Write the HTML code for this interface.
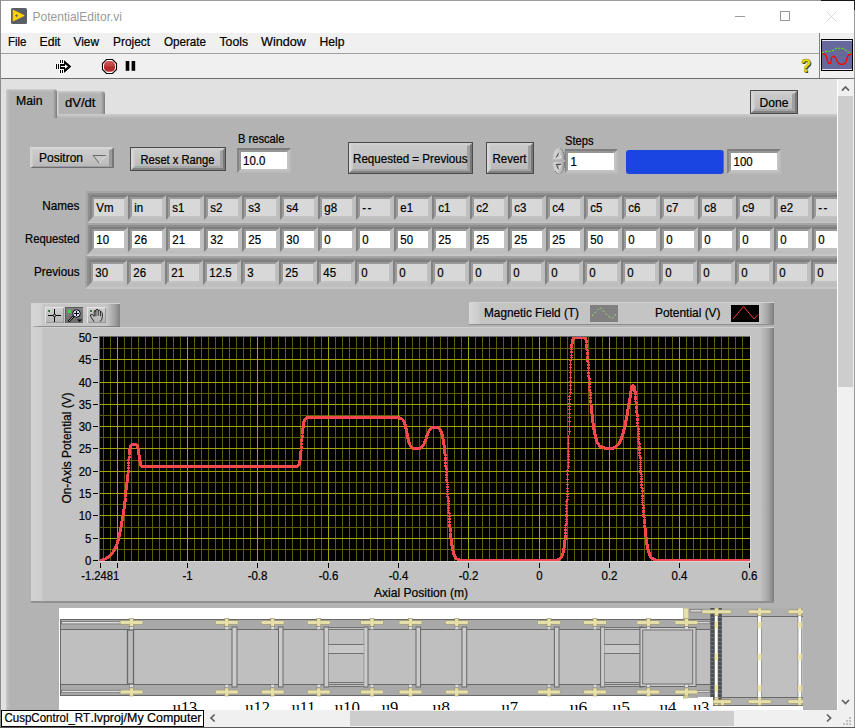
<!DOCTYPE html>
<html><head><meta charset="utf-8"><title>PotentialEditor.vi</title>
<style>
html,body{margin:0;padding:0}
body{width:855px;height:728px;position:relative;overflow:hidden;background:#fff;font-family:'Liberation Sans', sans-serif;}
div{box-sizing:border-box}
svg text{font-family:'Liberation Sans', sans-serif;}
</style></head><body>
<div style="position:absolute;left:0px;top:0px;width:855px;height:33px;background:#fff"></div>
<div style="position:absolute;left:0px;top:33px;width:855px;height:46px;background:#f0f0f0"></div>
<div style="position:absolute;left:1px;top:53px;width:818px;height:1px;background:#a0a0a0"></div>
<div style="position:absolute;left:819px;top:33px;width:1px;height:45px;background:#828282"></div>
<div style="position:absolute;left:0px;top:79px;width:838px;height:631px;background:#e1e1e1"></div>
<div style="position:absolute;left:0px;top:78px;width:855px;height:1px;background:#707070"></div>
<svg style="position:absolute;left:11px;top:8px" width="16" height="16" viewBox="0 0 16 16">
<rect x="0" y="0" width="16" height="16" rx="1.6" fill="#5c5e66"/>
<path d="M2.2 2.2 L13.2 7.6 L2.2 12.9 Z" fill="#ffd400" stroke="#ffd400" stroke-width="0.9" stroke-linejoin="round"/>
<path d="M5.6 6.3 V9.1 M4.2 7.7 H7" stroke="#5c5e66" stroke-width="0.9" fill="none"/>
</svg>
<svg style="position:absolute;left:730px;top:5px" width="115" height="24" viewBox="730 5 115 24">
<path d="M735 16.5 H745" stroke="#9a9a9a" stroke-width="1"/>
<rect x="780.5" y="11.5" width="9" height="9" fill="none" stroke="#9a9a9a" stroke-width="1"/>
<path d="M826.5 11.5 L836.5 21.5 M836.5 11.5 L826.5 21.5" stroke="#d6d6d6" stroke-width="1"/>
</svg>
<svg style="position:absolute;left:50px;top:54px" width="100" height="24" viewBox="50 54 100 24">
<!-- run arrow (running) -->
<g stroke="#fff" stroke-width="2" stroke-linejoin="round" fill="#fff"><path d="M64 60 L71.4 66.5 L64 73 Z M60 64 H64 V69 H60 Z"/><path d="M56.5 64V69M58.5 64V69M60.5 60V63M62.5 60V63M60.5 70V73M62.5 70V73" stroke-width="3"/></g>
<path d="M64 60 L71.4 66.5 L64 73 Z M60 64 H64.5 V69 H60 Z" fill="#000"/>
<path d="M61 66 H65 V64.3 L68 66.5 L65 68.7 V67 H61 Z" fill="#fff"/>
<path d="M56.5 64V69M58.5 64V69M60.5 60V63M62.5 60V63M60.5 70V73M62.5 70V73" stroke="#000" stroke-width="1" fill="none"/>
<!-- abort -->
<path d="M106.5 59.5 H112.5 L116.5 63.5 V69.5 L112.5 73.5 H106.5 L102.5 69.5 V63.5 Z" fill="#fff" stroke="#000" stroke-width="1.1"/>
<defs><linearGradient id="rg" x1="0" y1="0" x2="0" y2="1"><stop offset="0" stop-color="#d05858"/><stop offset="0.5" stop-color="#c03a3a"/><stop offset="0.55" stop-color="#b02828"/><stop offset="1" stop-color="#b83030"/></linearGradient></defs>
<rect x="104" y="61" width="11" height="10.8" rx="4.4" fill="url(#rg)"/>
<!-- pause -->
<rect x="125.7" y="61" width="3.6" height="9.8" fill="#000"/>
<rect x="131.6" y="61" width="3.6" height="9.8" fill="#000"/>
</svg>
<svg style="position:absolute;left:821px;top:39px" width="32" height="32" viewBox="0 0 32 32">
<rect x="0.5" y="0.5" width="31" height="31" fill="#67689b" stroke="#000" stroke-width="1"/>
<path d="M1 1.5H31M1 30.5H31" stroke="#e6e6f4" stroke-width="1"/>
<path d="M1 14.2 L3.5 12.6 L9.5 12 L12.5 11.3 L15 9.2 L21 9.2 L24 10.6 L27 13 L30.5 14.6" fill="none" stroke="#58f000" stroke-width="1.1" stroke-dasharray="2.2 1.3"/>
<path d="M1 15 L4 15.3 L5.5 18 L6.5 22 L7.5 24.2 L9.7 24.2 L10.5 19 L11.5 17.4 L13.5 17.4 L15 20 L16.5 23 L18.5 25 L22.5 25.3 L24.8 23.5 L26 19 L27.5 16 L31 14.8" fill="none" stroke="#f40808" stroke-width="1.4" stroke-linejoin="round"/>
</svg>
<div style="position:absolute;left:837px;top:79px;width:1px;height:631px;background:#fff"></div>
<div style="position:absolute;left:838px;top:79px;width:16px;height:631px;background:#f0f0f0"></div>
<div style="position:absolute;left:838px;top:96px;width:15px;height:291px;background:#cdcdcd"></div>
<div style="position:absolute;left:204px;top:710px;width:650px;height:17px;background:#f0f0f0"></div>
<div style="position:absolute;left:350px;top:711px;width:384px;height:15px;background:#cdcdcd"></div>
<svg style="position:absolute;left:838px;top:79px" width="16" height="20" viewBox="838 79 16 20"><path d="M842 90.6 L845.5 87 L849 90.6" fill="none" stroke="#606060" stroke-width="1.7"/></svg>
<svg style="position:absolute;left:838px;top:694px" width="16" height="16" viewBox="838 694 16 16"><path d="M842 700 L845.5 703.6 L849 700" fill="none" stroke="#606060" stroke-width="1.7"/></svg>
<svg style="position:absolute;left:205px;top:710px" width="16" height="17" viewBox="205 710 16 17"><path d="M214.6 714.5 L211 718 L214.6 721.5" fill="none" stroke="#606060" stroke-width="1.7"/></svg>
<svg style="position:absolute;left:820px;top:710px" width="34" height="17" viewBox="820 710 34 17"><path d="M827 714.5 L830.6 718 L827 721.5" fill="none" stroke="#606060" stroke-width="1.7"/>
<g fill="#c0c0c0"><rect x="849" y="717" width="2" height="2"/><rect x="849" y="720" width="2" height="2"/><rect x="849" y="723" width="2" height="2"/><rect x="846" y="720" width="2" height="2"/><rect x="846" y="723" width="2" height="2"/><rect x="843" y="723" width="2" height="2"/></g></svg>
<div style="position:absolute;left:1px;top:710px;width:203px;height:17px;background:#fff;border:1px solid #000"></div>
<div style="position:absolute;left:0;top:79px;width:837px;height:631px;overflow:hidden">
<div style="position:absolute;left:6px;top:35px;width:900px;height:700px;background:#b3b3b3"></div>
<div style="position:absolute;left:6px;top:35px;width:900px;height:4px;background:linear-gradient(#cbcbcb,#c3c3c3 50%,#b3b3b3)"></div>
<div style="position:absolute;left:6px;top:21px;width:4px;height:700px;background:linear-gradient(90deg,#c9c9c9,#bdbdbd 50%,#b3b3b3)"></div>
<div style="position:absolute;left:57px;top:12px;width:48px;height:23px;background:#b3b3b3;border-radius:0 3px 0 0"></div>
<div style="position:absolute;left:57px;top:12px;width:48px;height:3px;background:linear-gradient(#cdcdcd,#b3b3b3);border-radius:0 3px 0 0"></div>
<div style="position:absolute;left:101px;top:13px;width:4px;height:22px;background:linear-gradient(90deg,#b3b3b3,#9a9a9a 50%,#7c7c7c);border-radius:0 3px 0 0"></div>
<div style="position:absolute;left:57px;top:13px;width:2px;height:22px;background:linear-gradient(90deg,#e6e6e6,#b3b3b3)"></div>
<div style="position:absolute;left:6px;top:10px;width:51px;height:30px;background:#b3b3b3;border-radius:3px 3px 0 0"></div>
<div style="position:absolute;left:6px;top:10px;width:51px;height:3px;background:linear-gradient(#cdcdcd,#b3b3b3);border-radius:3px 3px 0 0"></div>
<div style="position:absolute;left:6px;top:11px;width:4px;height:30px;background:linear-gradient(90deg,#c9c9c9,#bdbdbd 50%,#b3b3b3);border-radius:3px 0 0 0"></div>
<div style="position:absolute;left:53px;top:11px;width:4px;height:28px;background:linear-gradient(90deg,#b3b3b3,#9a9a9a 50%,#7a7a7a);border-radius:0 3px 0 0"></div>
<div style="position:absolute;left:750px;top:11px;width:48px;height:24px;background:#4a4a4a"></div>
<div style="position:absolute;left:751px;top:12px;width:46px;height:22px;border-style:solid;border-width:2px;border-color:#d0d0d0 #787878 #828282 #d8d8d8;background:#c4c4c4"></div>
<div style="position:absolute;left:753px;top:14px;width:42px;height:18px;border-style:solid;border-width:1px 3px 2px 2px;border-color:#cacaca #a0a0a0 #a6a6a6 #cecece;background:linear-gradient(#cacaca,#c3c3c3 50%,#bababa)"></div>
<div style="position:absolute;left:30px;top:68px;width:84px;height:21px;border-style:solid;border-width:2px 2px 1px 2px;border-color:#d6d6d6 #787878 #6e6e6e #d2d2d2;background:#c0c0c0"></div>
<div style="position:absolute;left:32px;top:70px;width:80px;height:18px;border-style:solid;border-width:1px 3px 1px 1px;border-color:#cecece #9a9a9a #9e9e9e #cccccc;background:linear-gradient(#cdcdcd,#c4c4c4 50%,#bababa)"></div>
<div style="position:absolute;left:130px;top:68px;width:96px;height:24px;background:#4a4a4a"></div>
<div style="position:absolute;left:131px;top:69px;width:94px;height:22px;border-style:solid;border-width:2px;border-color:#d0d0d0 #787878 #828282 #d8d8d8;background:#c4c4c4"></div>
<div style="position:absolute;left:133px;top:71px;width:90px;height:18px;border-style:solid;border-width:1px 3px 2px 2px;border-color:#cacaca #a0a0a0 #a6a6a6 #cecece;background:linear-gradient(#cacaca,#c3c3c3 50%,#bababa)"></div>
<div style="position:absolute;left:237px;top:69px;width:54px;height:25px;border-style:solid;border-width:2px;border-color:#7e7e7e #bcbcbc #bababa #868686;background:#999"></div>
<div style="position:absolute;left:239px;top:71px;width:50px;height:21px;border-style:solid;border-width:2px;border-color:#969696 #c4c4c4 #c2c2c2 #9a9a9a;background:#fff"></div>
<div style="position:absolute;left:348px;top:63px;width:125px;height:32px;background:#4a4a4a"></div>
<div style="position:absolute;left:349px;top:64px;width:123px;height:30px;border-style:solid;border-width:2px;border-color:#d0d0d0 #787878 #828282 #d8d8d8;background:#c4c4c4"></div>
<div style="position:absolute;left:351px;top:66px;width:119px;height:26px;border-style:solid;border-width:1px 3px 2px 2px;border-color:#cacaca #a0a0a0 #a6a6a6 #cecece;background:linear-gradient(#cacaca,#c3c3c3 50%,#bababa)"></div>
<div style="position:absolute;left:486px;top:63px;width:48px;height:32px;background:#4a4a4a"></div>
<div style="position:absolute;left:487px;top:64px;width:46px;height:30px;border-style:solid;border-width:2px;border-color:#d0d0d0 #787878 #828282 #d8d8d8;background:#c4c4c4"></div>
<div style="position:absolute;left:489px;top:66px;width:42px;height:26px;border-style:solid;border-width:1px 3px 2px 2px;border-color:#cacaca #a0a0a0 #a6a6a6 #cecece;background:linear-gradient(#cacaca,#c3c3c3 50%,#bababa)"></div>
<div style="position:absolute;left:564px;top:70px;width:54px;height:25px;border-style:solid;border-width:2px;border-color:#7e7e7e #bcbcbc #bababa #868686;background:#999"></div>
<div style="position:absolute;left:566px;top:72px;width:50px;height:21px;border-style:solid;border-width:2px;border-color:#969696 #c4c4c4 #c2c2c2 #9a9a9a;background:#fff"></div>
<div style="position:absolute;left:564px;top:70px;width:1px;height:25px;background:#b3b3b3"></div>
<div style="position:absolute;left:626px;top:71px;width:98px;height:24px;background:#1a45e0;border-radius:3px;border-right:1px solid #6a6a8a"></div>
<div style="position:absolute;left:727px;top:70px;width:54px;height:25px;border-style:solid;border-width:2px;border-color:#7e7e7e #bcbcbc #bababa #868686;background:#999"></div>
<div style="position:absolute;left:729px;top:72px;width:50px;height:21px;border-style:solid;border-width:2px;border-color:#969696 #c4c4c4 #c2c2c2 #9a9a9a;background:#fff"></div>
<div style="position:absolute;left:86px;top:112px;width:900px;height:33px;border-style:solid;border-width:2px;border-color:#a4a4a4 #c4c4c4 #c6c6c6 #a6a6a6;background:#b3b3b3"></div>
<div style="position:absolute;left:88px;top:114px;width:900px;height:29px;border-style:solid;border-width:2px;border-color:#8e8e8e #bebebe #bebebe #8e8e8e;background:#b3b3b3"></div>
<div style="position:absolute;left:90px;top:116px;width:38px;height:25px;border-style:solid;border-width:2px;border-color:#7e7e7e #bcbcbc #bebebe #828282;background:#999"></div>
<div style="position:absolute;left:92px;top:118px;width:34px;height:21px;border-style:solid;border-width:2px;border-color:#989898 #c0c0c0 #c2c2c2 #9a9a9a;background:#d8d8d8"></div>
<div style="position:absolute;left:128px;top:116px;width:38px;height:25px;border-style:solid;border-width:2px;border-color:#7e7e7e #bcbcbc #bebebe #828282;background:#999"></div>
<div style="position:absolute;left:130px;top:118px;width:34px;height:21px;border-style:solid;border-width:2px;border-color:#989898 #c0c0c0 #c2c2c2 #9a9a9a;background:#d8d8d8"></div>
<div style="position:absolute;left:166px;top:116px;width:38px;height:25px;border-style:solid;border-width:2px;border-color:#7e7e7e #bcbcbc #bebebe #828282;background:#999"></div>
<div style="position:absolute;left:168px;top:118px;width:34px;height:21px;border-style:solid;border-width:2px;border-color:#989898 #c0c0c0 #c2c2c2 #9a9a9a;background:#d8d8d8"></div>
<div style="position:absolute;left:204px;top:116px;width:38px;height:25px;border-style:solid;border-width:2px;border-color:#7e7e7e #bcbcbc #bebebe #828282;background:#999"></div>
<div style="position:absolute;left:206px;top:118px;width:34px;height:21px;border-style:solid;border-width:2px;border-color:#989898 #c0c0c0 #c2c2c2 #9a9a9a;background:#d8d8d8"></div>
<div style="position:absolute;left:242px;top:116px;width:38px;height:25px;border-style:solid;border-width:2px;border-color:#7e7e7e #bcbcbc #bebebe #828282;background:#999"></div>
<div style="position:absolute;left:244px;top:118px;width:34px;height:21px;border-style:solid;border-width:2px;border-color:#989898 #c0c0c0 #c2c2c2 #9a9a9a;background:#d8d8d8"></div>
<div style="position:absolute;left:280px;top:116px;width:38px;height:25px;border-style:solid;border-width:2px;border-color:#7e7e7e #bcbcbc #bebebe #828282;background:#999"></div>
<div style="position:absolute;left:282px;top:118px;width:34px;height:21px;border-style:solid;border-width:2px;border-color:#989898 #c0c0c0 #c2c2c2 #9a9a9a;background:#d8d8d8"></div>
<div style="position:absolute;left:318px;top:116px;width:38px;height:25px;border-style:solid;border-width:2px;border-color:#7e7e7e #bcbcbc #bebebe #828282;background:#999"></div>
<div style="position:absolute;left:320px;top:118px;width:34px;height:21px;border-style:solid;border-width:2px;border-color:#989898 #c0c0c0 #c2c2c2 #9a9a9a;background:#d8d8d8"></div>
<div style="position:absolute;left:356px;top:116px;width:38px;height:25px;border-style:solid;border-width:2px;border-color:#7e7e7e #bcbcbc #bebebe #828282;background:#999"></div>
<div style="position:absolute;left:358px;top:118px;width:34px;height:21px;border-style:solid;border-width:2px;border-color:#989898 #c0c0c0 #c2c2c2 #9a9a9a;background:#d8d8d8"></div>
<div style="position:absolute;left:394px;top:116px;width:38px;height:25px;border-style:solid;border-width:2px;border-color:#7e7e7e #bcbcbc #bebebe #828282;background:#999"></div>
<div style="position:absolute;left:396px;top:118px;width:34px;height:21px;border-style:solid;border-width:2px;border-color:#989898 #c0c0c0 #c2c2c2 #9a9a9a;background:#d8d8d8"></div>
<div style="position:absolute;left:432px;top:116px;width:38px;height:25px;border-style:solid;border-width:2px;border-color:#7e7e7e #bcbcbc #bebebe #828282;background:#999"></div>
<div style="position:absolute;left:434px;top:118px;width:34px;height:21px;border-style:solid;border-width:2px;border-color:#989898 #c0c0c0 #c2c2c2 #9a9a9a;background:#d8d8d8"></div>
<div style="position:absolute;left:470px;top:116px;width:38px;height:25px;border-style:solid;border-width:2px;border-color:#7e7e7e #bcbcbc #bebebe #828282;background:#999"></div>
<div style="position:absolute;left:472px;top:118px;width:34px;height:21px;border-style:solid;border-width:2px;border-color:#989898 #c0c0c0 #c2c2c2 #9a9a9a;background:#d8d8d8"></div>
<div style="position:absolute;left:508px;top:116px;width:38px;height:25px;border-style:solid;border-width:2px;border-color:#7e7e7e #bcbcbc #bebebe #828282;background:#999"></div>
<div style="position:absolute;left:510px;top:118px;width:34px;height:21px;border-style:solid;border-width:2px;border-color:#989898 #c0c0c0 #c2c2c2 #9a9a9a;background:#d8d8d8"></div>
<div style="position:absolute;left:546px;top:116px;width:38px;height:25px;border-style:solid;border-width:2px;border-color:#7e7e7e #bcbcbc #bebebe #828282;background:#999"></div>
<div style="position:absolute;left:548px;top:118px;width:34px;height:21px;border-style:solid;border-width:2px;border-color:#989898 #c0c0c0 #c2c2c2 #9a9a9a;background:#d8d8d8"></div>
<div style="position:absolute;left:584px;top:116px;width:38px;height:25px;border-style:solid;border-width:2px;border-color:#7e7e7e #bcbcbc #bebebe #828282;background:#999"></div>
<div style="position:absolute;left:586px;top:118px;width:34px;height:21px;border-style:solid;border-width:2px;border-color:#989898 #c0c0c0 #c2c2c2 #9a9a9a;background:#d8d8d8"></div>
<div style="position:absolute;left:622px;top:116px;width:38px;height:25px;border-style:solid;border-width:2px;border-color:#7e7e7e #bcbcbc #bebebe #828282;background:#999"></div>
<div style="position:absolute;left:624px;top:118px;width:34px;height:21px;border-style:solid;border-width:2px;border-color:#989898 #c0c0c0 #c2c2c2 #9a9a9a;background:#d8d8d8"></div>
<div style="position:absolute;left:660px;top:116px;width:38px;height:25px;border-style:solid;border-width:2px;border-color:#7e7e7e #bcbcbc #bebebe #828282;background:#999"></div>
<div style="position:absolute;left:662px;top:118px;width:34px;height:21px;border-style:solid;border-width:2px;border-color:#989898 #c0c0c0 #c2c2c2 #9a9a9a;background:#d8d8d8"></div>
<div style="position:absolute;left:698px;top:116px;width:38px;height:25px;border-style:solid;border-width:2px;border-color:#7e7e7e #bcbcbc #bebebe #828282;background:#999"></div>
<div style="position:absolute;left:700px;top:118px;width:34px;height:21px;border-style:solid;border-width:2px;border-color:#989898 #c0c0c0 #c2c2c2 #9a9a9a;background:#d8d8d8"></div>
<div style="position:absolute;left:736px;top:116px;width:38px;height:25px;border-style:solid;border-width:2px;border-color:#7e7e7e #bcbcbc #bebebe #828282;background:#999"></div>
<div style="position:absolute;left:738px;top:118px;width:34px;height:21px;border-style:solid;border-width:2px;border-color:#989898 #c0c0c0 #c2c2c2 #9a9a9a;background:#d8d8d8"></div>
<div style="position:absolute;left:774px;top:116px;width:38px;height:25px;border-style:solid;border-width:2px;border-color:#7e7e7e #bcbcbc #bebebe #828282;background:#999"></div>
<div style="position:absolute;left:776px;top:118px;width:34px;height:21px;border-style:solid;border-width:2px;border-color:#989898 #c0c0c0 #c2c2c2 #9a9a9a;background:#d8d8d8"></div>
<div style="position:absolute;left:812px;top:116px;width:38px;height:25px;border-style:solid;border-width:2px;border-color:#7e7e7e #bcbcbc #bebebe #828282;background:#999"></div>
<div style="position:absolute;left:814px;top:118px;width:34px;height:21px;border-style:solid;border-width:2px;border-color:#989898 #c0c0c0 #c2c2c2 #9a9a9a;background:#d8d8d8"></div>
<div style="position:absolute;left:86px;top:144px;width:900px;height:33px;border-style:solid;border-width:2px;border-color:#a4a4a4 #c4c4c4 #c6c6c6 #a6a6a6;background:#b3b3b3"></div>
<div style="position:absolute;left:88px;top:146px;width:900px;height:29px;border-style:solid;border-width:2px;border-color:#8e8e8e #bebebe #bebebe #8e8e8e;background:#b3b3b3"></div>
<div style="position:absolute;left:90px;top:148px;width:38px;height:25px;border-style:solid;border-width:2px;border-color:#7e7e7e #bcbcbc #bebebe #828282;background:#999"></div>
<div style="position:absolute;left:92px;top:150px;width:34px;height:21px;border-style:solid;border-width:2px;border-color:#989898 #c0c0c0 #c2c2c2 #9a9a9a;background:#fff"></div>
<div style="position:absolute;left:128px;top:148px;width:38px;height:25px;border-style:solid;border-width:2px;border-color:#7e7e7e #bcbcbc #bebebe #828282;background:#999"></div>
<div style="position:absolute;left:130px;top:150px;width:34px;height:21px;border-style:solid;border-width:2px;border-color:#989898 #c0c0c0 #c2c2c2 #9a9a9a;background:#fff"></div>
<div style="position:absolute;left:166px;top:148px;width:38px;height:25px;border-style:solid;border-width:2px;border-color:#7e7e7e #bcbcbc #bebebe #828282;background:#999"></div>
<div style="position:absolute;left:168px;top:150px;width:34px;height:21px;border-style:solid;border-width:2px;border-color:#989898 #c0c0c0 #c2c2c2 #9a9a9a;background:#fff"></div>
<div style="position:absolute;left:204px;top:148px;width:38px;height:25px;border-style:solid;border-width:2px;border-color:#7e7e7e #bcbcbc #bebebe #828282;background:#999"></div>
<div style="position:absolute;left:206px;top:150px;width:34px;height:21px;border-style:solid;border-width:2px;border-color:#989898 #c0c0c0 #c2c2c2 #9a9a9a;background:#fff"></div>
<div style="position:absolute;left:242px;top:148px;width:38px;height:25px;border-style:solid;border-width:2px;border-color:#7e7e7e #bcbcbc #bebebe #828282;background:#999"></div>
<div style="position:absolute;left:244px;top:150px;width:34px;height:21px;border-style:solid;border-width:2px;border-color:#989898 #c0c0c0 #c2c2c2 #9a9a9a;background:#fff"></div>
<div style="position:absolute;left:280px;top:148px;width:38px;height:25px;border-style:solid;border-width:2px;border-color:#7e7e7e #bcbcbc #bebebe #828282;background:#999"></div>
<div style="position:absolute;left:282px;top:150px;width:34px;height:21px;border-style:solid;border-width:2px;border-color:#989898 #c0c0c0 #c2c2c2 #9a9a9a;background:#fff"></div>
<div style="position:absolute;left:318px;top:148px;width:38px;height:25px;border-style:solid;border-width:2px;border-color:#7e7e7e #bcbcbc #bebebe #828282;background:#999"></div>
<div style="position:absolute;left:320px;top:150px;width:34px;height:21px;border-style:solid;border-width:2px;border-color:#989898 #c0c0c0 #c2c2c2 #9a9a9a;background:#fff"></div>
<div style="position:absolute;left:356px;top:148px;width:38px;height:25px;border-style:solid;border-width:2px;border-color:#7e7e7e #bcbcbc #bebebe #828282;background:#999"></div>
<div style="position:absolute;left:358px;top:150px;width:34px;height:21px;border-style:solid;border-width:2px;border-color:#989898 #c0c0c0 #c2c2c2 #9a9a9a;background:#fff"></div>
<div style="position:absolute;left:394px;top:148px;width:38px;height:25px;border-style:solid;border-width:2px;border-color:#7e7e7e #bcbcbc #bebebe #828282;background:#999"></div>
<div style="position:absolute;left:396px;top:150px;width:34px;height:21px;border-style:solid;border-width:2px;border-color:#989898 #c0c0c0 #c2c2c2 #9a9a9a;background:#fff"></div>
<div style="position:absolute;left:432px;top:148px;width:38px;height:25px;border-style:solid;border-width:2px;border-color:#7e7e7e #bcbcbc #bebebe #828282;background:#999"></div>
<div style="position:absolute;left:434px;top:150px;width:34px;height:21px;border-style:solid;border-width:2px;border-color:#989898 #c0c0c0 #c2c2c2 #9a9a9a;background:#fff"></div>
<div style="position:absolute;left:470px;top:148px;width:38px;height:25px;border-style:solid;border-width:2px;border-color:#7e7e7e #bcbcbc #bebebe #828282;background:#999"></div>
<div style="position:absolute;left:472px;top:150px;width:34px;height:21px;border-style:solid;border-width:2px;border-color:#989898 #c0c0c0 #c2c2c2 #9a9a9a;background:#fff"></div>
<div style="position:absolute;left:508px;top:148px;width:38px;height:25px;border-style:solid;border-width:2px;border-color:#7e7e7e #bcbcbc #bebebe #828282;background:#999"></div>
<div style="position:absolute;left:510px;top:150px;width:34px;height:21px;border-style:solid;border-width:2px;border-color:#989898 #c0c0c0 #c2c2c2 #9a9a9a;background:#fff"></div>
<div style="position:absolute;left:546px;top:148px;width:38px;height:25px;border-style:solid;border-width:2px;border-color:#7e7e7e #bcbcbc #bebebe #828282;background:#999"></div>
<div style="position:absolute;left:548px;top:150px;width:34px;height:21px;border-style:solid;border-width:2px;border-color:#989898 #c0c0c0 #c2c2c2 #9a9a9a;background:#fff"></div>
<div style="position:absolute;left:584px;top:148px;width:38px;height:25px;border-style:solid;border-width:2px;border-color:#7e7e7e #bcbcbc #bebebe #828282;background:#999"></div>
<div style="position:absolute;left:586px;top:150px;width:34px;height:21px;border-style:solid;border-width:2px;border-color:#989898 #c0c0c0 #c2c2c2 #9a9a9a;background:#fff"></div>
<div style="position:absolute;left:622px;top:148px;width:38px;height:25px;border-style:solid;border-width:2px;border-color:#7e7e7e #bcbcbc #bebebe #828282;background:#999"></div>
<div style="position:absolute;left:624px;top:150px;width:34px;height:21px;border-style:solid;border-width:2px;border-color:#989898 #c0c0c0 #c2c2c2 #9a9a9a;background:#fff"></div>
<div style="position:absolute;left:660px;top:148px;width:38px;height:25px;border-style:solid;border-width:2px;border-color:#7e7e7e #bcbcbc #bebebe #828282;background:#999"></div>
<div style="position:absolute;left:662px;top:150px;width:34px;height:21px;border-style:solid;border-width:2px;border-color:#989898 #c0c0c0 #c2c2c2 #9a9a9a;background:#fff"></div>
<div style="position:absolute;left:698px;top:148px;width:38px;height:25px;border-style:solid;border-width:2px;border-color:#7e7e7e #bcbcbc #bebebe #828282;background:#999"></div>
<div style="position:absolute;left:700px;top:150px;width:34px;height:21px;border-style:solid;border-width:2px;border-color:#989898 #c0c0c0 #c2c2c2 #9a9a9a;background:#fff"></div>
<div style="position:absolute;left:736px;top:148px;width:38px;height:25px;border-style:solid;border-width:2px;border-color:#7e7e7e #bcbcbc #bebebe #828282;background:#999"></div>
<div style="position:absolute;left:738px;top:150px;width:34px;height:21px;border-style:solid;border-width:2px;border-color:#989898 #c0c0c0 #c2c2c2 #9a9a9a;background:#fff"></div>
<div style="position:absolute;left:774px;top:148px;width:38px;height:25px;border-style:solid;border-width:2px;border-color:#7e7e7e #bcbcbc #bebebe #828282;background:#999"></div>
<div style="position:absolute;left:776px;top:150px;width:34px;height:21px;border-style:solid;border-width:2px;border-color:#989898 #c0c0c0 #c2c2c2 #9a9a9a;background:#fff"></div>
<div style="position:absolute;left:812px;top:148px;width:38px;height:25px;border-style:solid;border-width:2px;border-color:#7e7e7e #bcbcbc #bebebe #828282;background:#999"></div>
<div style="position:absolute;left:814px;top:150px;width:34px;height:21px;border-style:solid;border-width:2px;border-color:#989898 #c0c0c0 #c2c2c2 #9a9a9a;background:#fff"></div>
<div style="position:absolute;left:85px;top:177px;width:900px;height:33px;border-style:solid;border-width:2px;border-color:#a4a4a4 #c4c4c4 #c6c6c6 #a6a6a6;background:#b3b3b3"></div>
<div style="position:absolute;left:87px;top:179px;width:900px;height:29px;border-style:solid;border-width:2px;border-color:#8e8e8e #bebebe #bebebe #8e8e8e;background:#b3b3b3"></div>
<div style="position:absolute;left:89px;top:181px;width:38px;height:25px;border-style:solid;border-width:2px;border-color:#7e7e7e #bcbcbc #bebebe #828282;background:#999"></div>
<div style="position:absolute;left:91px;top:183px;width:34px;height:21px;border-style:solid;border-width:2px;border-color:#989898 #c0c0c0 #c2c2c2 #9a9a9a;background:#d8d8d8"></div>
<div style="position:absolute;left:127px;top:181px;width:38px;height:25px;border-style:solid;border-width:2px;border-color:#7e7e7e #bcbcbc #bebebe #828282;background:#999"></div>
<div style="position:absolute;left:129px;top:183px;width:34px;height:21px;border-style:solid;border-width:2px;border-color:#989898 #c0c0c0 #c2c2c2 #9a9a9a;background:#d8d8d8"></div>
<div style="position:absolute;left:165px;top:181px;width:38px;height:25px;border-style:solid;border-width:2px;border-color:#7e7e7e #bcbcbc #bebebe #828282;background:#999"></div>
<div style="position:absolute;left:167px;top:183px;width:34px;height:21px;border-style:solid;border-width:2px;border-color:#989898 #c0c0c0 #c2c2c2 #9a9a9a;background:#d8d8d8"></div>
<div style="position:absolute;left:203px;top:181px;width:38px;height:25px;border-style:solid;border-width:2px;border-color:#7e7e7e #bcbcbc #bebebe #828282;background:#999"></div>
<div style="position:absolute;left:205px;top:183px;width:34px;height:21px;border-style:solid;border-width:2px;border-color:#989898 #c0c0c0 #c2c2c2 #9a9a9a;background:#d8d8d8"></div>
<div style="position:absolute;left:241px;top:181px;width:38px;height:25px;border-style:solid;border-width:2px;border-color:#7e7e7e #bcbcbc #bebebe #828282;background:#999"></div>
<div style="position:absolute;left:243px;top:183px;width:34px;height:21px;border-style:solid;border-width:2px;border-color:#989898 #c0c0c0 #c2c2c2 #9a9a9a;background:#d8d8d8"></div>
<div style="position:absolute;left:279px;top:181px;width:38px;height:25px;border-style:solid;border-width:2px;border-color:#7e7e7e #bcbcbc #bebebe #828282;background:#999"></div>
<div style="position:absolute;left:281px;top:183px;width:34px;height:21px;border-style:solid;border-width:2px;border-color:#989898 #c0c0c0 #c2c2c2 #9a9a9a;background:#d8d8d8"></div>
<div style="position:absolute;left:317px;top:181px;width:38px;height:25px;border-style:solid;border-width:2px;border-color:#7e7e7e #bcbcbc #bebebe #828282;background:#999"></div>
<div style="position:absolute;left:319px;top:183px;width:34px;height:21px;border-style:solid;border-width:2px;border-color:#989898 #c0c0c0 #c2c2c2 #9a9a9a;background:#d8d8d8"></div>
<div style="position:absolute;left:355px;top:181px;width:38px;height:25px;border-style:solid;border-width:2px;border-color:#7e7e7e #bcbcbc #bebebe #828282;background:#999"></div>
<div style="position:absolute;left:357px;top:183px;width:34px;height:21px;border-style:solid;border-width:2px;border-color:#989898 #c0c0c0 #c2c2c2 #9a9a9a;background:#d8d8d8"></div>
<div style="position:absolute;left:393px;top:181px;width:38px;height:25px;border-style:solid;border-width:2px;border-color:#7e7e7e #bcbcbc #bebebe #828282;background:#999"></div>
<div style="position:absolute;left:395px;top:183px;width:34px;height:21px;border-style:solid;border-width:2px;border-color:#989898 #c0c0c0 #c2c2c2 #9a9a9a;background:#d8d8d8"></div>
<div style="position:absolute;left:431px;top:181px;width:38px;height:25px;border-style:solid;border-width:2px;border-color:#7e7e7e #bcbcbc #bebebe #828282;background:#999"></div>
<div style="position:absolute;left:433px;top:183px;width:34px;height:21px;border-style:solid;border-width:2px;border-color:#989898 #c0c0c0 #c2c2c2 #9a9a9a;background:#d8d8d8"></div>
<div style="position:absolute;left:469px;top:181px;width:38px;height:25px;border-style:solid;border-width:2px;border-color:#7e7e7e #bcbcbc #bebebe #828282;background:#999"></div>
<div style="position:absolute;left:471px;top:183px;width:34px;height:21px;border-style:solid;border-width:2px;border-color:#989898 #c0c0c0 #c2c2c2 #9a9a9a;background:#d8d8d8"></div>
<div style="position:absolute;left:507px;top:181px;width:38px;height:25px;border-style:solid;border-width:2px;border-color:#7e7e7e #bcbcbc #bebebe #828282;background:#999"></div>
<div style="position:absolute;left:509px;top:183px;width:34px;height:21px;border-style:solid;border-width:2px;border-color:#989898 #c0c0c0 #c2c2c2 #9a9a9a;background:#d8d8d8"></div>
<div style="position:absolute;left:545px;top:181px;width:38px;height:25px;border-style:solid;border-width:2px;border-color:#7e7e7e #bcbcbc #bebebe #828282;background:#999"></div>
<div style="position:absolute;left:547px;top:183px;width:34px;height:21px;border-style:solid;border-width:2px;border-color:#989898 #c0c0c0 #c2c2c2 #9a9a9a;background:#d8d8d8"></div>
<div style="position:absolute;left:583px;top:181px;width:38px;height:25px;border-style:solid;border-width:2px;border-color:#7e7e7e #bcbcbc #bebebe #828282;background:#999"></div>
<div style="position:absolute;left:585px;top:183px;width:34px;height:21px;border-style:solid;border-width:2px;border-color:#989898 #c0c0c0 #c2c2c2 #9a9a9a;background:#d8d8d8"></div>
<div style="position:absolute;left:621px;top:181px;width:38px;height:25px;border-style:solid;border-width:2px;border-color:#7e7e7e #bcbcbc #bebebe #828282;background:#999"></div>
<div style="position:absolute;left:623px;top:183px;width:34px;height:21px;border-style:solid;border-width:2px;border-color:#989898 #c0c0c0 #c2c2c2 #9a9a9a;background:#d8d8d8"></div>
<div style="position:absolute;left:659px;top:181px;width:38px;height:25px;border-style:solid;border-width:2px;border-color:#7e7e7e #bcbcbc #bebebe #828282;background:#999"></div>
<div style="position:absolute;left:661px;top:183px;width:34px;height:21px;border-style:solid;border-width:2px;border-color:#989898 #c0c0c0 #c2c2c2 #9a9a9a;background:#d8d8d8"></div>
<div style="position:absolute;left:697px;top:181px;width:38px;height:25px;border-style:solid;border-width:2px;border-color:#7e7e7e #bcbcbc #bebebe #828282;background:#999"></div>
<div style="position:absolute;left:699px;top:183px;width:34px;height:21px;border-style:solid;border-width:2px;border-color:#989898 #c0c0c0 #c2c2c2 #9a9a9a;background:#d8d8d8"></div>
<div style="position:absolute;left:735px;top:181px;width:38px;height:25px;border-style:solid;border-width:2px;border-color:#7e7e7e #bcbcbc #bebebe #828282;background:#999"></div>
<div style="position:absolute;left:737px;top:183px;width:34px;height:21px;border-style:solid;border-width:2px;border-color:#989898 #c0c0c0 #c2c2c2 #9a9a9a;background:#d8d8d8"></div>
<div style="position:absolute;left:773px;top:181px;width:38px;height:25px;border-style:solid;border-width:2px;border-color:#7e7e7e #bcbcbc #bebebe #828282;background:#999"></div>
<div style="position:absolute;left:775px;top:183px;width:34px;height:21px;border-style:solid;border-width:2px;border-color:#989898 #c0c0c0 #c2c2c2 #9a9a9a;background:#d8d8d8"></div>
<div style="position:absolute;left:811px;top:181px;width:38px;height:25px;border-style:solid;border-width:2px;border-color:#7e7e7e #bcbcbc #bebebe #828282;background:#999"></div>
<div style="position:absolute;left:813px;top:183px;width:34px;height:21px;border-style:solid;border-width:2px;border-color:#989898 #c0c0c0 #c2c2c2 #9a9a9a;background:#d8d8d8"></div>
<div style="position:absolute;left:31px;top:224px;width:89px;height:24px;background:linear-gradient(90deg,#d6d6d6 0,#d2d2d2 10px,#c7c7c7 12px,#c5c5c5 76px,#a6a6a6 83px,#808080 89px);border-top:1px solid #d2d2d2"></div>
<div style="position:absolute;left:33px;top:247px;width:87px;height:1px;background:linear-gradient(90deg,#b0b0b0,#8e8e8e 8px,#8a8a8a 70px,#777)"></div>
<div style="position:absolute;left:469px;top:223px;width:305px;height:23px;background:linear-gradient(90deg,#d8d8d8 0,#cdcdcd 9px,#c4c4c4 12px,#c4c4c4 291px,#a8a8a8 298px,#7e7e7e 305px);border-top:1px solid #d2d2d2;border-bottom:1px solid #8e8e8e"></div>
<div style="position:absolute;left:31px;top:248px;width:743px;height:276px;background:linear-gradient(90deg,#d2d2d2 0,#cecece 10px,#c3c3c3 12px,#c3c3c3 729px,#a6a6a6 737px,#7c7c7c 743px);border-bottom:2px solid #909090;border-top:1px solid #d0d0d0"></div>
<svg style="position:absolute;left:0;top:0" width="837" height="631" viewBox="0 79 837 631"><clipPath id="pic"><rect x="59" y="608" width="744" height="102"/></clipPath><g clip-path="url(#pic)"><rect x="59" y="608" width="744" height="110" fill="#fff"/>
<rect x="60" y="619" width="650" height="77" fill="#a9a9a9"/>
<rect x="60" y="630" width="650" height="54" fill="#bfbfbf"/>
<path d="M60 619.5H689M60 629.5H710M60 684.5H710M60 695.5H689M60.5 619V696" stroke="#686868" stroke-width="1" fill="none"/>
<rect x="61.5" y="621.5" width="59" height="2.4" fill="#dedede" stroke="#686868" stroke-width="0.7"/><rect x="61.5" y="690.3" width="59" height="2.4" fill="#dedede" stroke="#686868" stroke-width="0.7"/>
<rect x="689" y="608" width="22" height="90" fill="#a9a9a9"/><rect x="696" y="630" width="14" height="54" fill="#bfbfbf"/>
<path d="M689 619.5H710M696 629.5H710M696 684.5H710" stroke="#686868" stroke-width="1" fill="none"/>
<rect x="690" y="609.6" width="12" height="2.4" fill="#d4d4d4" stroke="#686868" stroke-width="0.6"/><rect x="697" y="621.4" width="13" height="2.4" fill="#d4d4d4" stroke="#686868" stroke-width="0.6"/><rect x="697" y="690.3" width="13" height="2.4" fill="#d4d4d4" stroke="#686868" stroke-width="0.6"/>
<rect x="127.5" y="630" width="6.0" height="54" fill="#bcbcbc" stroke="#686868" stroke-width="1.3"/>
<rect x="232" y="627" width="5.0" height="60" fill="#cbcbcb" stroke="#686868" stroke-width="1"/>
<rect x="278.5" y="627" width="4.5" height="60" fill="#cbcbcb" stroke="#686868" stroke-width="1"/>
<rect x="324" y="627" width="4.6" height="60" fill="#cbcbcb" stroke="#686868" stroke-width="1"/>
<rect x="363.7" y="627" width="4.3" height="60" fill="#cbcbcb" stroke="#686868" stroke-width="1"/>
<rect x="416" y="627" width="4.6" height="60" fill="#cbcbcb" stroke="#686868" stroke-width="1"/>
<rect x="462" y="627" width="4.7" height="60" fill="#cbcbcb" stroke="#686868" stroke-width="1"/>
<rect x="554.4" y="627" width="4.6" height="60" fill="#cbcbcb" stroke="#686868" stroke-width="1"/>
<rect x="600.6" y="627" width="4.0" height="60" fill="#cbcbcb" stroke="#686868" stroke-width="1"/>
<rect x="639.6" y="627" width="3.4" height="60" fill="#cbcbcb" stroke="#686868" stroke-width="1"/>
<rect x="328.6" y="627" width="35.1" height="60" fill="#bfbfbf"/>
<path d="M328.6 627.5H363.7M328.6 629.5H363.7M328.6 644.5H363.7M328.6 653.5H363.7M328.6 682.5H363.7M328.6 684.5H363.7M328.6 686.5H363.7" stroke="#686868" stroke-width="0.9" fill="none"/>
<rect x="328.6" y="645" width="35.1" height="8" fill="#c8c8c8"/>
<rect x="604.6" y="627" width="35.0" height="60" fill="#bfbfbf"/>
<path d="M604.6 627.5H639.6M604.6 629.5H639.6M604.6 644.5H639.6M604.6 653.5H639.6M604.6 682.5H639.6M604.6 684.5H639.6M604.6 686.5H639.6" stroke="#686868" stroke-width="0.9" fill="none"/>
<rect x="604.6" y="645" width="35.0" height="8" fill="#c8c8c8"/>
<rect x="640" y="627.5" width="56" height="59" fill="#cbcbcb" stroke="#686868" stroke-width="1"/><rect x="642.7" y="630" width="50" height="54" fill="#bfbfbf" stroke="#686868" stroke-width="0.9"/>
<rect x="683.7" y="608" width="4.8" height="12" fill="#e7e0aa" stroke="#8e8656" stroke-width="0.5"/><rect x="683.7" y="693" width="4.8" height="5" fill="#e7e0aa" stroke="#8e8656" stroke-width="0.5"/>
<rect x="120.0" y="620.7" width="23.0" height="3.6" rx="1.8" fill="#e7e0aa" stroke="#8e8656" stroke-width="0.5"/><rect x="129.5" y="618.5" width="4" height="8" fill="#e7e0aa" stroke="#8e8656" stroke-width="0.5"/><rect x="120.6" y="621.2" width="21.8" height="2.6" fill="#e7e0aa"/>
<rect x="120.0" y="690.2" width="23.0" height="3.6" rx="1.8" fill="#e7e0aa" stroke="#8e8656" stroke-width="0.5"/><rect x="129.5" y="688" width="4" height="8" fill="#e7e0aa" stroke="#8e8656" stroke-width="0.5"/><rect x="120.6" y="690.7" width="21.8" height="2.6" fill="#e7e0aa"/>
<rect x="129.7" y="626.5" width="3.6" height="3" fill="#dedede" stroke="#686868" stroke-width="0.4"/><rect x="129.7" y="684.5" width="3.6" height="3" fill="#dedede" stroke="#686868" stroke-width="0.4"/>
<rect x="215.3" y="620.7" width="23.0" height="3.6" rx="1.8" fill="#e7e0aa" stroke="#8e8656" stroke-width="0.5"/><rect x="224.8" y="618.5" width="4" height="8" fill="#e7e0aa" stroke="#8e8656" stroke-width="0.5"/><rect x="215.9" y="621.2" width="21.8" height="2.6" fill="#e7e0aa"/>
<rect x="215.3" y="690.2" width="23.0" height="3.6" rx="1.8" fill="#e7e0aa" stroke="#8e8656" stroke-width="0.5"/><rect x="224.8" y="688" width="4" height="8" fill="#e7e0aa" stroke="#8e8656" stroke-width="0.5"/><rect x="215.9" y="690.7" width="21.8" height="2.6" fill="#e7e0aa"/>
<rect x="225.0" y="626.5" width="3.6" height="3" fill="#dedede" stroke="#686868" stroke-width="0.4"/><rect x="225.0" y="684.5" width="3.6" height="3" fill="#dedede" stroke="#686868" stroke-width="0.4"/>
<rect x="261.2" y="620.7" width="23.0" height="3.6" rx="1.8" fill="#e7e0aa" stroke="#8e8656" stroke-width="0.5"/><rect x="270.7" y="618.5" width="4" height="8" fill="#e7e0aa" stroke="#8e8656" stroke-width="0.5"/><rect x="261.8" y="621.2" width="21.8" height="2.6" fill="#e7e0aa"/>
<rect x="261.2" y="690.2" width="23.0" height="3.6" rx="1.8" fill="#e7e0aa" stroke="#8e8656" stroke-width="0.5"/><rect x="270.7" y="688" width="4" height="8" fill="#e7e0aa" stroke="#8e8656" stroke-width="0.5"/><rect x="261.8" y="690.7" width="21.8" height="2.6" fill="#e7e0aa"/>
<rect x="270.9" y="626.5" width="3.6" height="3" fill="#dedede" stroke="#686868" stroke-width="0.4"/><rect x="270.9" y="684.5" width="3.6" height="3" fill="#dedede" stroke="#686868" stroke-width="0.4"/>
<rect x="307.3" y="620.7" width="23.0" height="3.6" rx="1.8" fill="#e7e0aa" stroke="#8e8656" stroke-width="0.5"/><rect x="316.8" y="618.5" width="4" height="8" fill="#e7e0aa" stroke="#8e8656" stroke-width="0.5"/><rect x="307.90000000000003" y="621.2" width="21.8" height="2.6" fill="#e7e0aa"/>
<rect x="307.3" y="690.2" width="23.0" height="3.6" rx="1.8" fill="#e7e0aa" stroke="#8e8656" stroke-width="0.5"/><rect x="316.8" y="688" width="4" height="8" fill="#e7e0aa" stroke="#8e8656" stroke-width="0.5"/><rect x="307.90000000000003" y="690.7" width="21.8" height="2.6" fill="#e7e0aa"/>
<rect x="317.0" y="626.5" width="3.6" height="3" fill="#dedede" stroke="#686868" stroke-width="0.4"/><rect x="317.0" y="684.5" width="3.6" height="3" fill="#dedede" stroke="#686868" stroke-width="0.4"/>
<rect x="360.5" y="620.7" width="23.0" height="3.6" rx="1.8" fill="#e7e0aa" stroke="#8e8656" stroke-width="0.5"/><rect x="370" y="618.5" width="4" height="8" fill="#e7e0aa" stroke="#8e8656" stroke-width="0.5"/><rect x="361.1" y="621.2" width="21.8" height="2.6" fill="#e7e0aa"/>
<rect x="360.5" y="690.2" width="23.0" height="3.6" rx="1.8" fill="#e7e0aa" stroke="#8e8656" stroke-width="0.5"/><rect x="370" y="688" width="4" height="8" fill="#e7e0aa" stroke="#8e8656" stroke-width="0.5"/><rect x="361.1" y="690.7" width="21.8" height="2.6" fill="#e7e0aa"/>
<rect x="370.2" y="626.5" width="3.6" height="3" fill="#dedede" stroke="#686868" stroke-width="0.4"/><rect x="370.2" y="684.5" width="3.6" height="3" fill="#dedede" stroke="#686868" stroke-width="0.4"/>
<rect x="399.0" y="620.7" width="23.0" height="3.6" rx="1.8" fill="#e7e0aa" stroke="#8e8656" stroke-width="0.5"/><rect x="408.5" y="618.5" width="4" height="8" fill="#e7e0aa" stroke="#8e8656" stroke-width="0.5"/><rect x="399.6" y="621.2" width="21.8" height="2.6" fill="#e7e0aa"/>
<rect x="399.0" y="690.2" width="23.0" height="3.6" rx="1.8" fill="#e7e0aa" stroke="#8e8656" stroke-width="0.5"/><rect x="408.5" y="688" width="4" height="8" fill="#e7e0aa" stroke="#8e8656" stroke-width="0.5"/><rect x="399.6" y="690.7" width="21.8" height="2.6" fill="#e7e0aa"/>
<rect x="408.7" y="626.5" width="3.6" height="3" fill="#dedede" stroke="#686868" stroke-width="0.4"/><rect x="408.7" y="684.5" width="3.6" height="3" fill="#dedede" stroke="#686868" stroke-width="0.4"/>
<rect x="445.3" y="620.7" width="23.0" height="3.6" rx="1.8" fill="#e7e0aa" stroke="#8e8656" stroke-width="0.5"/><rect x="454.8" y="618.5" width="4" height="8" fill="#e7e0aa" stroke="#8e8656" stroke-width="0.5"/><rect x="445.90000000000003" y="621.2" width="21.8" height="2.6" fill="#e7e0aa"/>
<rect x="445.3" y="690.2" width="23.0" height="3.6" rx="1.8" fill="#e7e0aa" stroke="#8e8656" stroke-width="0.5"/><rect x="454.8" y="688" width="4" height="8" fill="#e7e0aa" stroke="#8e8656" stroke-width="0.5"/><rect x="445.90000000000003" y="690.7" width="21.8" height="2.6" fill="#e7e0aa"/>
<rect x="455.0" y="626.5" width="3.6" height="3" fill="#dedede" stroke="#686868" stroke-width="0.4"/><rect x="455.0" y="684.5" width="3.6" height="3" fill="#dedede" stroke="#686868" stroke-width="0.4"/>
<rect x="537.5" y="620.7" width="23.0" height="3.6" rx="1.8" fill="#e7e0aa" stroke="#8e8656" stroke-width="0.5"/><rect x="547" y="618.5" width="4" height="8" fill="#e7e0aa" stroke="#8e8656" stroke-width="0.5"/><rect x="538.1" y="621.2" width="21.8" height="2.6" fill="#e7e0aa"/>
<rect x="537.5" y="690.2" width="23.0" height="3.6" rx="1.8" fill="#e7e0aa" stroke="#8e8656" stroke-width="0.5"/><rect x="547" y="688" width="4" height="8" fill="#e7e0aa" stroke="#8e8656" stroke-width="0.5"/><rect x="538.1" y="690.7" width="21.8" height="2.6" fill="#e7e0aa"/>
<rect x="547.2" y="626.5" width="3.6" height="3" fill="#dedede" stroke="#686868" stroke-width="0.4"/><rect x="547.2" y="684.5" width="3.6" height="3" fill="#dedede" stroke="#686868" stroke-width="0.4"/>
<rect x="583.5" y="620.7" width="23.0" height="3.6" rx="1.8" fill="#e7e0aa" stroke="#8e8656" stroke-width="0.5"/><rect x="593" y="618.5" width="4" height="8" fill="#e7e0aa" stroke="#8e8656" stroke-width="0.5"/><rect x="584.1" y="621.2" width="21.8" height="2.6" fill="#e7e0aa"/>
<rect x="583.5" y="690.2" width="23.0" height="3.6" rx="1.8" fill="#e7e0aa" stroke="#8e8656" stroke-width="0.5"/><rect x="593" y="688" width="4" height="8" fill="#e7e0aa" stroke="#8e8656" stroke-width="0.5"/><rect x="584.1" y="690.7" width="21.8" height="2.6" fill="#e7e0aa"/>
<rect x="593.2" y="626.5" width="3.6" height="3" fill="#dedede" stroke="#686868" stroke-width="0.4"/><rect x="593.2" y="684.5" width="3.6" height="3" fill="#dedede" stroke="#686868" stroke-width="0.4"/>
<rect x="636.8" y="620.7" width="23.0" height="3.6" rx="1.8" fill="#e7e0aa" stroke="#8e8656" stroke-width="0.5"/><rect x="646.3" y="618.5" width="4" height="8" fill="#e7e0aa" stroke="#8e8656" stroke-width="0.5"/><rect x="637.4" y="621.2" width="21.8" height="2.6" fill="#e7e0aa"/>
<rect x="636.8" y="690.2" width="23.0" height="3.6" rx="1.8" fill="#e7e0aa" stroke="#8e8656" stroke-width="0.5"/><rect x="646.3" y="688" width="4" height="8" fill="#e7e0aa" stroke="#8e8656" stroke-width="0.5"/><rect x="637.4" y="690.7" width="21.8" height="2.6" fill="#e7e0aa"/>
<rect x="646.5" y="626.5" width="3.6" height="3" fill="#dedede" stroke="#686868" stroke-width="0.4"/><rect x="646.5" y="684.5" width="3.6" height="3" fill="#dedede" stroke="#686868" stroke-width="0.4"/>
<rect x="674.9" y="620.7" width="23.0" height="3.6" rx="1.8" fill="#e7e0aa" stroke="#8e8656" stroke-width="0.5"/><rect x="684.4" y="618.5" width="4" height="8" fill="#e7e0aa" stroke="#8e8656" stroke-width="0.5"/><rect x="675.5" y="621.2" width="21.8" height="2.6" fill="#e7e0aa"/>
<rect x="674.9" y="690.2" width="23.0" height="3.6" rx="1.8" fill="#e7e0aa" stroke="#8e8656" stroke-width="0.5"/><rect x="684.4" y="688" width="4" height="8" fill="#e7e0aa" stroke="#8e8656" stroke-width="0.5"/><rect x="675.5" y="690.7" width="21.8" height="2.6" fill="#e7e0aa"/>
<rect x="684.6" y="626.5" width="3.6" height="3" fill="#dedede" stroke="#686868" stroke-width="0.4"/><rect x="684.6" y="684.5" width="3.6" height="3" fill="#dedede" stroke="#686868" stroke-width="0.4"/>
<rect x="710" y="608" width="93" height="98" fill="#afafaf"/>
<rect x="722" y="616" width="81" height="82" fill="#c0c0c0"/>
<path d="M722 616.5H803M722 697.5H803M710 705.5H803" stroke="#686868" stroke-width="1" fill="none"/>
<rect x="710.3" y="608" width="4.4" height="92" fill="#4b4f53"/><rect x="718" y="608" width="3.8" height="92" fill="#4b4f53"/>
<path d="M710.5 609.5H714.7M718 609.5H721.8M710.5 613.5H714.7M718 613.5H721.8M710.5 617.5H714.7M718 617.5H721.8M710.5 621.5H714.7M718 621.5H721.8M710.5 625.5H714.7M718 625.5H721.8M710.5 629.5H714.7M718 629.5H721.8M710.5 633.5H714.7M718 633.5H721.8M710.5 637.5H714.7M718 637.5H721.8M710.5 641.5H714.7M718 641.5H721.8M710.5 645.5H714.7M718 645.5H721.8M710.5 649.5H714.7M718 649.5H721.8M710.5 653.5H714.7M718 653.5H721.8M710.5 657.5H714.7M718 657.5H721.8M710.5 661.5H714.7M718 661.5H721.8M710.5 665.5H714.7M718 665.5H721.8M710.5 669.5H714.7M718 669.5H721.8M710.5 673.5H714.7M718 673.5H721.8M710.5 677.5H714.7M718 677.5H721.8M710.5 681.5H714.7M718 681.5H721.8M710.5 685.5H714.7M718 685.5H721.8M710.5 689.5H714.7M718 689.5H721.8M710.5 693.5H714.7M718 693.5H721.8M710.5 697.5H714.7M718 697.5H721.8" stroke="#7a7e82" stroke-width="0.8"/>
<rect x="714.7" y="614" width="3.3" height="86" fill="#fff" stroke="#686868" stroke-width="0.6"/>
<rect x="714.7" y="621.8" width="3.3" height="6.7" fill="#efe9a8"/>
<rect x="714.7" y="653.7" width="3.3" height="6.7" fill="#efe9a8"/>
<rect x="714.7" y="684.9" width="3.3" height="6.6" fill="#efe9a8"/>
<rect x="757.7" y="614" width="3.8" height="86" fill="#fff" stroke="#686868" stroke-width="0.6"/>
<rect x="757.7" y="621.8" width="3.8" height="6.7" fill="#efe9a8"/>
<rect x="757.7" y="653.7" width="3.8" height="6.7" fill="#efe9a8"/>
<rect x="757.7" y="684.9" width="3.8" height="6.6" fill="#efe9a8"/>
<rect x="798" y="614" width="3.7" height="86" fill="#fff" stroke="#686868" stroke-width="0.6"/>
<rect x="798" y="621.8" width="3.7" height="6.7" fill="#efe9a8"/>
<rect x="798" y="653.7" width="3.7" height="6.7" fill="#efe9a8"/>
<rect x="798" y="684.9" width="3.7" height="6.6" fill="#efe9a8"/>
<rect x="701.8000000000001" y="610.0" width="29.6" height="3.6" rx="1.8" fill="#e7e0aa" stroke="#8e8656" stroke-width="0.5"/><rect x="714.6" y="608.0" width="4" height="7.8" fill="#e7e0aa" stroke="#8e8656" stroke-width="0.5"/><rect x="702.4000000000001" y="610.5" width="28.400000000000002" height="2.6" fill="#e7e0aa"/>
<rect x="701.8000000000001" y="699.9000000000001" width="29.6" height="3.6" rx="1.8" fill="#e7e0aa" stroke="#8e8656" stroke-width="0.5"/><rect x="714.6" y="697.7" width="4" height="7.5" fill="#e7e0aa" stroke="#8e8656" stroke-width="0.5"/><rect x="702.4000000000001" y="700.4000000000001" width="28.400000000000002" height="2.6" fill="#e7e0aa"/>
<rect x="748.2" y="610.0" width="23.0" height="3.6" rx="1.8" fill="#e7e0aa" stroke="#8e8656" stroke-width="0.5"/><rect x="757.7" y="608.0" width="4" height="7.8" fill="#e7e0aa" stroke="#8e8656" stroke-width="0.5"/><rect x="748.8000000000001" y="610.5" width="21.8" height="2.6" fill="#e7e0aa"/>
<rect x="748.2" y="699.9000000000001" width="23.0" height="3.6" rx="1.8" fill="#e7e0aa" stroke="#8e8656" stroke-width="0.5"/><rect x="757.7" y="697.7" width="4" height="7.5" fill="#e7e0aa" stroke="#8e8656" stroke-width="0.5"/><rect x="748.8000000000001" y="700.4000000000001" width="21.8" height="2.6" fill="#e7e0aa"/>
<rect x="788.0" y="610.0" width="23.6" height="3.6" rx="1.8" fill="#e7e0aa" stroke="#8e8656" stroke-width="0.5"/><rect x="797.8" y="608.0" width="4" height="7.8" fill="#e7e0aa" stroke="#8e8656" stroke-width="0.5"/><rect x="788.6" y="610.5" width="22.400000000000002" height="2.6" fill="#e7e0aa"/>
<rect x="788.0" y="699.9000000000001" width="23.6" height="3.6" rx="1.8" fill="#e7e0aa" stroke="#8e8656" stroke-width="0.5"/><rect x="797.8" y="697.7" width="4" height="7.5" fill="#e7e0aa" stroke="#8e8656" stroke-width="0.5"/><rect x="788.6" y="700.4000000000001" width="22.400000000000002" height="2.6" fill="#e7e0aa"/>
<rect x="698" y="697" width="15" height="12" fill="#fff"/>
<rect x="713.0999999999999" y="699.9000000000001" width="18.4" height="3.6" rx="1.8" fill="#e7e0aa" stroke="#8e8656" stroke-width="0.5"/><rect x="720.3" y="699.7" width="4" height="5.5" fill="#e7e0aa" stroke="#8e8656" stroke-width="0.5"/><rect x="713.6999999999999" y="700.4000000000001" width="17.2" height="2.6" fill="#e7e0aa"/><text x="172.7" y="713" font-size="16" style="font-family:'Liberation Serif',serif" textLength="24.6" lengthAdjust="spacingAndGlyphs" fill="#000">u13</text><text x="245.2" y="713" font-size="16" style="font-family:'Liberation Serif',serif" textLength="24.7" lengthAdjust="spacingAndGlyphs" fill="#000">u12</text><text x="291.7" y="713" font-size="16" style="font-family:'Liberation Serif',serif" textLength="23.6" lengthAdjust="spacingAndGlyphs" fill="#000">u11</text><text x="334.7" y="713" font-size="16" style="font-family:'Liberation Serif',serif" textLength="25.3" lengthAdjust="spacingAndGlyphs" fill="#000">u10</text><text x="381.7" y="713" font-size="16" style="font-family:'Liberation Serif',serif" textLength="16.6" lengthAdjust="spacingAndGlyphs" fill="#000">u9</text><text x="432.4" y="713" font-size="16" style="font-family:'Liberation Serif',serif" textLength="17.5" lengthAdjust="spacingAndGlyphs" fill="#000">u8</text><text x="501.5" y="713" font-size="16" style="font-family:'Liberation Serif',serif" textLength="16.5" lengthAdjust="spacingAndGlyphs" fill="#000">u7</text><text x="569.7" y="713" font-size="16" style="font-family:'Liberation Serif',serif" textLength="17.6" lengthAdjust="spacingAndGlyphs" fill="#000">u6</text><text x="612.4000000000001" y="713" font-size="16" style="font-family:'Liberation Serif',serif" textLength="17.5" lengthAdjust="spacingAndGlyphs" fill="#000">u5</text><text x="659.7" y="713" font-size="16" style="font-family:'Liberation Serif',serif" textLength="16.6" lengthAdjust="spacingAndGlyphs" fill="#000">u4</text><text x="693.2" y="713" font-size="16" style="font-family:'Liberation Serif',serif" textLength="16.1" lengthAdjust="spacingAndGlyphs" fill="#000">u3</text></g></svg>
</div>
<div style="position:absolute;left:0px;top:0px;width:855px;height:1px;background:#9c9c9c"></div>
<div style="position:absolute;left:0px;top:0px;width:1px;height:728px;background:#8c8c8c"></div>
<div style="position:absolute;left:854px;top:0px;width:1px;height:728px;background:#9a9a9a"></div>
<div style="position:absolute;left:0px;top:727px;width:855px;height:1px;background:#5a5a5a"></div>
<div style="position:absolute;left:821px;top:0px;width:34px;height:1px;background:#161616"></div>
<div style="position:absolute;left:854px;top:0px;width:1px;height:10px;background:#222"></div>
<svg style="position:absolute;left:0;top:0" width="855" height="728" viewBox="0 0 855 728">
<text x="32.5" y="21" font-size="12.4" fill="#9a9a9a" textLength="89.5" lengthAdjust="spacingAndGlyphs">PotentialEditor.vi</text>
<text x="8.0" y="46" font-size="12.4" fill="#000" textLength="18.5" lengthAdjust="spacingAndGlyphs" stroke="#000" stroke-width="0.22">File</text>
<text x="39.5" y="46" font-size="12.4" fill="#000" textLength="21" lengthAdjust="spacingAndGlyphs" stroke="#000" stroke-width="0.22">Edit</text>
<text x="73.5" y="46" font-size="12.4" fill="#000" textLength="25.5" lengthAdjust="spacingAndGlyphs" stroke="#000" stroke-width="0.22">View</text>
<text x="113.0" y="46" font-size="12.4" fill="#000" textLength="37.0" lengthAdjust="spacingAndGlyphs" stroke="#000" stroke-width="0.22">Project</text>
<text x="164.0" y="46" font-size="12.4" fill="#000" textLength="42.0" lengthAdjust="spacingAndGlyphs" stroke="#000" stroke-width="0.22">Operate</text>
<text x="219.5" y="46" font-size="12.4" fill="#000" textLength="28.5" lengthAdjust="spacingAndGlyphs" stroke="#000" stroke-width="0.22">Tools</text>
<text x="261.0" y="46" font-size="12.4" fill="#000" textLength="45.0" lengthAdjust="spacingAndGlyphs" stroke="#000" stroke-width="0.22">Window</text>
<text x="319.5" y="46" font-size="12.4" fill="#000" textLength="25" lengthAdjust="spacingAndGlyphs" stroke="#000" stroke-width="0.22">Help</text>
<text transform="translate(802,72.6) scale(0.9,1)" font-size="18.5" fill="#2c2c18" font-weight="bold">?</text>
<text transform="translate(801,71.7) scale(0.9,1)" font-size="18.5" fill="#f6ee00" font-weight="bold" stroke="#77740a" stroke-width="0.5">?</text>
<text x="4.5" y="722" font-size="12.4" fill="#000" textLength="85.5" lengthAdjust="spacingAndGlyphs" stroke="#000" stroke-width="0.22">CuspControl_RT</text>
<text x="90.5" y="722" font-size="12.4" fill="#000" textLength="111" lengthAdjust="spacingAndGlyphs" stroke="#000" stroke-width="0.22">.lvproj/My Computer</text>
<text x="16" y="105" font-size="12.4" fill="#000" textLength="26.5" lengthAdjust="spacingAndGlyphs" stroke="#000" stroke-width="0.22">Main</text>
<text x="65" y="107" font-size="12.4" fill="#000" textLength="30.5" lengthAdjust="spacingAndGlyphs" stroke="#000" stroke-width="0.22">dV/dt</text>
<text x="759.5" y="107" font-size="12.4" fill="#000" textLength="29" lengthAdjust="spacingAndGlyphs" stroke="#000" stroke-width="0.22">Done</text>
<text x="39" y="162" font-size="12.4" fill="#000" textLength="44" lengthAdjust="spacingAndGlyphs" stroke="#000" stroke-width="0.22">Positron</text>
<path d="M93 155.5 H106 L99.5 163.5 Z" fill="#c8c8c8" stroke="#6a6a6a" stroke-width="1"/><path d="M106 155.5 L99.5 163.5" stroke="#f4f4f4" stroke-width="1" fill="none"/>
<text x="140.5" y="164" font-size="12.4" fill="#000" textLength="74" lengthAdjust="spacingAndGlyphs" stroke="#000" stroke-width="0.22">Reset x Range</text>
<text x="238" y="143" font-size="12.4" fill="#000" textLength="46.5" lengthAdjust="spacingAndGlyphs" stroke="#000" stroke-width="0.22">B rescale</text>
<text transform="translate(243,165) scale(0.925,1)" font-size="12.4" fill="#000" stroke="#000" stroke-width="0.22">10.0</text>
<text x="353.0" y="163" font-size="12.4" fill="#000" textLength="114.5" lengthAdjust="spacingAndGlyphs" stroke="#000" stroke-width="0.22">Requested = Previous</text>
<text x="492.5" y="163" font-size="12.4" fill="#000" textLength="34" lengthAdjust="spacingAndGlyphs" stroke="#000" stroke-width="0.22">Revert</text>
<text x="565" y="145" font-size="12.4" fill="#000" textLength="28.5" lengthAdjust="spacingAndGlyphs" stroke="#000" stroke-width="0.22">Steps</text>
<defs><linearGradient id="sg" x1="0" y1="0" x2="1" y2="0"><stop offset="0" stop-color="#c6c6c6"/><stop offset="0.3" stop-color="#d2d2d2"/><stop offset="0.7" stop-color="#bcbcbc"/><stop offset="1" stop-color="#8e8e8e"/></linearGradient></defs>
<path d="M552.6 159.6 C552.6 152 555.8 148 558.8 148 C561.8 148 565 152 565 159.6 Z" fill="url(#sg)"/>
<path d="M552.6 162 C552.6 169.6 555.8 173.8 558.8 173.8 C561.8 173.8 565 169.6 565 162 Z" fill="url(#sg)"/>
<path d="M560.5 148.6 C563 150 564.6 154 564.6 159.4" fill="none" stroke="#5a5a5a" stroke-width="0.8" stroke-dasharray="1.2 1"/>
<path d="M564.6 162.2 C564.6 168 563 172 560 173.4 M555 171 C556 172.6 557.5 173.6 559 173.6" fill="none" stroke="#4e4e4e" stroke-width="0.8" stroke-dasharray="1.2 1"/>
<path d="M556.3 157.6 L558.8 152.8" stroke="#333" stroke-width="1" fill="none"/><path d="M558.8 152.8 L561.2 157.6 H556.8" stroke="#e8e8e8" stroke-width="0.9" fill="none"/>
<path d="M556.3 164.4 H561.2 M556.3 164.4 L558.6 169.2" stroke="#333" stroke-width="1" fill="none"/><path d="M561.2 164.6 L558.9 169.2" stroke="#ececec" stroke-width="0.9" fill="none"/>
<text transform="translate(570.5,166) scale(0.925,1)" font-size="12.4" fill="#000" stroke="#000" stroke-width="0.22">1</text>
<text transform="translate(733.5,166) scale(0.925,1)" font-size="12.4" fill="#000" stroke="#000" stroke-width="0.22">100</text>
<text transform="translate(96.3,212) scale(0.925,1)" font-size="12.4" fill="#000" stroke="#000" stroke-width="0.22">Vm</text>
<text transform="translate(134.3,212) scale(0.925,1)" font-size="12.4" fill="#000" stroke="#000" stroke-width="0.22">in</text>
<text transform="translate(172.3,212) scale(0.925,1)" font-size="12.4" fill="#000" stroke="#000" stroke-width="0.22">s1</text>
<text transform="translate(210.3,212) scale(0.925,1)" font-size="12.4" fill="#000" stroke="#000" stroke-width="0.22">s2</text>
<text transform="translate(248.3,212) scale(0.925,1)" font-size="12.4" fill="#000" stroke="#000" stroke-width="0.22">s3</text>
<text transform="translate(286.3,212) scale(0.925,1)" font-size="12.4" fill="#000" stroke="#000" stroke-width="0.22">s4</text>
<text transform="translate(324.3,212) scale(0.925,1)" font-size="12.4" fill="#000" stroke="#000" stroke-width="0.22">g8</text>
<text transform="translate(362.3,212) scale(0.925,1)" font-size="12.4" fill="#000" stroke="#000" stroke-width="0.22" letter-spacing="1.6">--</text>
<text transform="translate(400.3,212) scale(0.925,1)" font-size="12.4" fill="#000" stroke="#000" stroke-width="0.22">e1</text>
<text transform="translate(438.3,212) scale(0.925,1)" font-size="12.4" fill="#000" stroke="#000" stroke-width="0.22">c1</text>
<text transform="translate(476.3,212) scale(0.925,1)" font-size="12.4" fill="#000" stroke="#000" stroke-width="0.22">c2</text>
<text transform="translate(514.3,212) scale(0.925,1)" font-size="12.4" fill="#000" stroke="#000" stroke-width="0.22">c3</text>
<text transform="translate(552.3,212) scale(0.925,1)" font-size="12.4" fill="#000" stroke="#000" stroke-width="0.22">c4</text>
<text transform="translate(590.3,212) scale(0.925,1)" font-size="12.4" fill="#000" stroke="#000" stroke-width="0.22">c5</text>
<text transform="translate(628.3,212) scale(0.925,1)" font-size="12.4" fill="#000" stroke="#000" stroke-width="0.22">c6</text>
<text transform="translate(666.3,212) scale(0.925,1)" font-size="12.4" fill="#000" stroke="#000" stroke-width="0.22">c7</text>
<text transform="translate(704.3,212) scale(0.925,1)" font-size="12.4" fill="#000" stroke="#000" stroke-width="0.22">c8</text>
<text transform="translate(742.3,212) scale(0.925,1)" font-size="12.4" fill="#000" stroke="#000" stroke-width="0.22">c9</text>
<text transform="translate(780.3,212) scale(0.925,1)" font-size="12.4" fill="#000" stroke="#000" stroke-width="0.22">e2</text>
<text transform="translate(818.3,212) scale(0.925,1)" font-size="12.4" fill="#000" stroke="#000" stroke-width="0.22" letter-spacing="1.6">--</text>
<text x="42.3" y="210" font-size="12.4" fill="#000" textLength="37.2" lengthAdjust="spacingAndGlyphs" stroke="#000" stroke-width="0.22">Names</text>
<text transform="translate(96.3,244) scale(0.925,1)" font-size="12.4" fill="#000" stroke="#000" stroke-width="0.22">10</text>
<text transform="translate(134.3,244) scale(0.925,1)" font-size="12.4" fill="#000" stroke="#000" stroke-width="0.22">26</text>
<text transform="translate(172.3,244) scale(0.925,1)" font-size="12.4" fill="#000" stroke="#000" stroke-width="0.22">21</text>
<text transform="translate(210.3,244) scale(0.925,1)" font-size="12.4" fill="#000" stroke="#000" stroke-width="0.22">32</text>
<text transform="translate(248.3,244) scale(0.925,1)" font-size="12.4" fill="#000" stroke="#000" stroke-width="0.22">25</text>
<text transform="translate(286.3,244) scale(0.925,1)" font-size="12.4" fill="#000" stroke="#000" stroke-width="0.22">30</text>
<text transform="translate(324.3,244) scale(0.925,1)" font-size="12.4" fill="#000" stroke="#000" stroke-width="0.22">0</text>
<text transform="translate(362.3,244) scale(0.925,1)" font-size="12.4" fill="#000" stroke="#000" stroke-width="0.22">0</text>
<text transform="translate(400.3,244) scale(0.925,1)" font-size="12.4" fill="#000" stroke="#000" stroke-width="0.22">50</text>
<text transform="translate(438.3,244) scale(0.925,1)" font-size="12.4" fill="#000" stroke="#000" stroke-width="0.22">25</text>
<text transform="translate(476.3,244) scale(0.925,1)" font-size="12.4" fill="#000" stroke="#000" stroke-width="0.22">25</text>
<text transform="translate(514.3,244) scale(0.925,1)" font-size="12.4" fill="#000" stroke="#000" stroke-width="0.22">25</text>
<text transform="translate(552.3,244) scale(0.925,1)" font-size="12.4" fill="#000" stroke="#000" stroke-width="0.22">25</text>
<text transform="translate(590.3,244) scale(0.925,1)" font-size="12.4" fill="#000" stroke="#000" stroke-width="0.22">50</text>
<text transform="translate(628.3,244) scale(0.925,1)" font-size="12.4" fill="#000" stroke="#000" stroke-width="0.22">0</text>
<text transform="translate(666.3,244) scale(0.925,1)" font-size="12.4" fill="#000" stroke="#000" stroke-width="0.22">0</text>
<text transform="translate(704.3,244) scale(0.925,1)" font-size="12.4" fill="#000" stroke="#000" stroke-width="0.22">0</text>
<text transform="translate(742.3,244) scale(0.925,1)" font-size="12.4" fill="#000" stroke="#000" stroke-width="0.22">0</text>
<text transform="translate(780.3,244) scale(0.925,1)" font-size="12.4" fill="#000" stroke="#000" stroke-width="0.22">0</text>
<text transform="translate(818.3,244) scale(0.925,1)" font-size="12.4" fill="#000" stroke="#000" stroke-width="0.22">0</text>
<text x="25" y="243" font-size="12.4" fill="#000" textLength="54.5" lengthAdjust="spacingAndGlyphs" stroke="#000" stroke-width="0.22">Requested</text>
<text transform="translate(95.3,277) scale(0.925,1)" font-size="12.4" fill="#000" stroke="#000" stroke-width="0.22">30</text>
<text transform="translate(133.3,277) scale(0.925,1)" font-size="12.4" fill="#000" stroke="#000" stroke-width="0.22">26</text>
<text transform="translate(171.3,277) scale(0.925,1)" font-size="12.4" fill="#000" stroke="#000" stroke-width="0.22">21</text>
<text transform="translate(209.3,277) scale(0.925,1)" font-size="12.4" fill="#000" stroke="#000" stroke-width="0.22">12.5</text>
<text transform="translate(247.3,277) scale(0.925,1)" font-size="12.4" fill="#000" stroke="#000" stroke-width="0.22">3</text>
<text transform="translate(285.3,277) scale(0.925,1)" font-size="12.4" fill="#000" stroke="#000" stroke-width="0.22">25</text>
<text transform="translate(323.3,277) scale(0.925,1)" font-size="12.4" fill="#000" stroke="#000" stroke-width="0.22">45</text>
<text transform="translate(361.3,277) scale(0.925,1)" font-size="12.4" fill="#000" stroke="#000" stroke-width="0.22">0</text>
<text transform="translate(399.3,277) scale(0.925,1)" font-size="12.4" fill="#000" stroke="#000" stroke-width="0.22">0</text>
<text transform="translate(437.3,277) scale(0.925,1)" font-size="12.4" fill="#000" stroke="#000" stroke-width="0.22">0</text>
<text transform="translate(475.3,277) scale(0.925,1)" font-size="12.4" fill="#000" stroke="#000" stroke-width="0.22">0</text>
<text transform="translate(513.3,277) scale(0.925,1)" font-size="12.4" fill="#000" stroke="#000" stroke-width="0.22">0</text>
<text transform="translate(551.3,277) scale(0.925,1)" font-size="12.4" fill="#000" stroke="#000" stroke-width="0.22">0</text>
<text transform="translate(589.3,277) scale(0.925,1)" font-size="12.4" fill="#000" stroke="#000" stroke-width="0.22">0</text>
<text transform="translate(627.3,277) scale(0.925,1)" font-size="12.4" fill="#000" stroke="#000" stroke-width="0.22">0</text>
<text transform="translate(665.3,277) scale(0.925,1)" font-size="12.4" fill="#000" stroke="#000" stroke-width="0.22">0</text>
<text transform="translate(703.3,277) scale(0.925,1)" font-size="12.4" fill="#000" stroke="#000" stroke-width="0.22">0</text>
<text transform="translate(741.3,277) scale(0.925,1)" font-size="12.4" fill="#000" stroke="#000" stroke-width="0.22">0</text>
<text transform="translate(779.3,277) scale(0.925,1)" font-size="12.4" fill="#000" stroke="#000" stroke-width="0.22">0</text>
<text transform="translate(817.3,277) scale(0.925,1)" font-size="12.4" fill="#000" stroke="#000" stroke-width="0.22">0</text>
<text x="34" y="276" font-size="12.4" fill="#000" textLength="45.5" lengthAdjust="spacingAndGlyphs" stroke="#000" stroke-width="0.22">Previous</text>
<rect x="99" y="336" width="652" height="226" fill="#d6d6d6"/>
<rect x="99" y="336" width="651" height="225" fill="#6a6a6a"/>
<rect x="100" y="337" width="650" height="224" fill="#000"/>
<path d="M103.5 337V561M110.5 337V561M124.5 337V561M131.5 337V561M138.5 337V561M145.5 337V561M152.5 337V561M159.5 337V561M166.5 337V561M173.5 337V561M180.5 337V561M194.5 337V561M201.5 337V561M208.5 337V561M215.5 337V561M222.5 337V561M229.5 337V561M236.5 337V561M243.5 337V561M250.5 337V561M264.5 337V561M271.5 337V561M278.5 337V561M285.5 337V561M292.5 337V561M300.5 337V561M307.5 337V561M314.5 337V561M321.5 337V561M335.5 337V561M342.5 337V561M349.5 337V561M356.5 337V561M363.5 337V561M370.5 337V561M377.5 337V561M384.5 337V561M391.5 337V561M405.5 337V561M412.5 337V561M419.5 337V561M426.5 337V561M433.5 337V561M440.5 337V561M447.5 337V561M454.5 337V561M461.5 337V561M475.5 337V561M482.5 337V561M489.5 337V561M496.5 337V561M503.5 337V561M511.5 337V561M518.5 337V561M525.5 337V561M532.5 337V561M546.5 337V561M553.5 337V561M560.5 337V561M567.5 337V561M574.5 337V561M581.5 337V561M588.5 337V561M595.5 337V561M602.5 337V561M616.5 337V561M623.5 337V561M630.5 337V561M637.5 337V561M644.5 337V561M651.5 337V561M658.5 337V561M665.5 337V561M672.5 337V561M686.5 337V561M693.5 337V561M700.5 337V561M707.5 337V561M714.5 337V561M721.5 337V561M728.5 337V561M735.5 337V561M742.5 337V561M100 549.5H750M100 527.5H750M100 504.5H750M100 482.5H750M100 460.5H750M100 437.5H750M100 415.5H750M100 393.5H750M100 370.5H750M100 348.5H750" stroke="#605d00" stroke-width="1" fill="none" shape-rendering="crispEdges"/>
<path d="M117.5 337V561M187.5 337V561M257.5 337V561M328.5 337V561M398.5 337V561M468.5 337V561M539.5 337V561M609.5 337V561M679.5 337V561M100 538.5H750M100 515.5H750M100 493.5H750M100 471.5H750M100 448.5H750M100 426.5H750M100 404.5H750M100 382.5H750M100 359.5H750" stroke="#a6a400" stroke-width="1" fill="none" shape-rendering="crispEdges"/>
<path d="M572 337.5h15M572 338.5h15M571 339.5h4M584 339.5h3M571 340.5h3M585 340.5h3M571 341.5h3M585 341.5h3M571 342.5h3M585 342.5h3M571 343.5h3M586 343.5h1M570 344.5h3M585 344.5h3M570 345.5h3M585 345.5h3M570 346.5h3M585 346.5h3M570 347.5h3M585 347.5h3M571 348.5h1M586 348.5h1M570 349.5h3M585 349.5h3M571 350.5h1M586 350.5h3M570 351.5h3M587 351.5h1M570 352.5h3M586 352.5h3M571 353.5h1M586 353.5h3M571 354.5h1M586 354.5h3M570 355.5h3M587 355.5h1M571 356.5h1M586 356.5h3M570 357.5h3M586 357.5h3M571 358.5h1M586 358.5h3M570 359.5h1M587 359.5h1M569 360.5h3M586 360.5h3M570 361.5h1M586 361.5h3M570 362.5h1M587 362.5h3M570 363.5h1M588 363.5h1M569 364.5h3M587 364.5h3M570 365.5h1M587 365.5h3M570 366.5h1M588 366.5h1M569 367.5h3M587 367.5h3M570 368.5h1M587 368.5h3M570 369.5h1M588 369.5h1M570 370.5h1M587 370.5h3M570 371.5h1M588 371.5h1M569 372.5h3M587 372.5h3M570 373.5h1M587 373.5h3M570 374.5h1M588 374.5h1M570 375.5h1M587 375.5h3M570 376.5h1M587 376.5h3M569 377.5h3M588 377.5h2M570 378.5h1M588 378.5h3M570 379.5h1M588 379.5h3M570 380.5h1M589 380.5h1M569 381.5h3M588 381.5h3M570 382.5h1M589 382.5h1M570 383.5h1M588 383.5h3M570 384.5h1M588 384.5h3M632 384.5h2M569 385.5h3M589 385.5h1M631 385.5h4M570 386.5h1M588 386.5h3M630 386.5h6M570 387.5h1M588 387.5h3M630 387.5h6M570 388.5h1M589 388.5h1M630 388.5h6M569 389.5h3M588 389.5h3M630 389.5h6M570 390.5h1M588 390.5h3M630 390.5h6M570 391.5h1M589 391.5h2M629 391.5h3M633 391.5h4M569 392.5h3M589 392.5h3M629 392.5h3M634 392.5h3M570 393.5h1M590 393.5h1M629 393.5h3M634 393.5h3M570 394.5h1M589 394.5h3M629 394.5h3M634 394.5h3M569 395.5h1M589 395.5h3M629 395.5h3M635 395.5h1M568 396.5h3M590 396.5h1M629 396.5h3M634 396.5h3M569 397.5h1M589 397.5h3M629 397.5h3M634 397.5h3M569 398.5h1M589 398.5h3M628 398.5h3M634 398.5h3M568 399.5h3M590 399.5h1M628 399.5h3M634 399.5h3M569 400.5h1M589 400.5h3M628 400.5h3M635 400.5h1M569 401.5h1M589 401.5h3M628 401.5h3M634 401.5h3M569 402.5h1M589 402.5h3M628 402.5h3M635 402.5h3M568 403.5h3M590 403.5h1M627 403.5h4M635 403.5h3M569 404.5h1M589 404.5h3M627 404.5h3M635 404.5h3M569 405.5h1M590 405.5h3M627 405.5h3M636 405.5h1M568 406.5h3M590 406.5h3M627 406.5h3M635 406.5h3M569 407.5h1M590 407.5h3M627 407.5h3M635 407.5h3M569 408.5h1M590 408.5h3M627 408.5h3M635 408.5h3M568 409.5h3M590 409.5h3M626 409.5h3M636 409.5h1M569 410.5h1M590 410.5h3M626 410.5h3M635 410.5h3M569 411.5h1M590 411.5h3M626 411.5h3M635 411.5h3M569 412.5h1M590 412.5h3M626 412.5h3M635 412.5h3M568 413.5h3M590 413.5h3M626 413.5h3M636 413.5h2M569 414.5h1M591 414.5h3M626 414.5h3M636 414.5h3M569 415.5h1M591 415.5h3M625 415.5h4M636 415.5h3M306 416.5h94M569 416.5h1M591 416.5h3M625 416.5h3M636 416.5h3M305 417.5h97M568 417.5h3M591 417.5h3M625 417.5h3M637 417.5h1M304 418.5h99M569 418.5h1M591 418.5h3M625 418.5h3M636 418.5h3M303 419.5h4M399 419.5h5M569 419.5h1M591 419.5h3M625 419.5h3M636 419.5h3M303 420.5h3M402 420.5h3M569 420.5h1M591 420.5h3M624 420.5h4M636 420.5h3M302 421.5h4M402 421.5h4M568 421.5h3M591 421.5h3M624 421.5h3M637 421.5h1M302 422.5h3M403 422.5h3M569 422.5h1M591 422.5h3M624 422.5h3M636 422.5h3M302 423.5h3M403 423.5h3M569 423.5h1M592 423.5h3M624 423.5h3M636 423.5h3M302 424.5h3M403 424.5h4M569 424.5h1M592 424.5h3M624 424.5h3M637 424.5h1M302 425.5h3M404 425.5h3M569 425.5h1M592 425.5h3M623 425.5h4M636 425.5h3M302 426.5h3M404 426.5h3M431 426.5h8M568 426.5h3M592 426.5h3M623 426.5h3M637 426.5h3M302 427.5h3M404 427.5h3M430 427.5h10M569 427.5h1M592 427.5h3M623 427.5h3M638 427.5h1M301 428.5h3M404 428.5h4M429 428.5h12M569 428.5h1M592 428.5h3M623 428.5h3M637 428.5h3M301 429.5h3M405 429.5h3M428 429.5h4M438 429.5h4M569 429.5h1M592 429.5h4M622 429.5h4M637 429.5h3M301 430.5h3M405 430.5h3M428 430.5h3M439 430.5h3M569 430.5h1M593 430.5h3M622 430.5h3M638 430.5h1M301 431.5h3M405 431.5h3M427 431.5h3M439 431.5h4M568 431.5h3M593 431.5h3M622 431.5h3M637 431.5h3M301 432.5h3M405 432.5h3M427 432.5h3M440 432.5h3M569 432.5h1M593 432.5h3M622 432.5h3M638 432.5h1M301 433.5h3M406 433.5h3M426 433.5h3M440 433.5h3M569 433.5h1M593 433.5h3M621 433.5h4M637 433.5h3M302 434.5h1M406 434.5h3M426 434.5h3M440 434.5h4M569 434.5h1M593 434.5h4M621 434.5h3M637 434.5h3M301 435.5h3M406 435.5h3M425 435.5h4M441 435.5h3M568 435.5h1M594 435.5h3M621 435.5h3M638 435.5h1M301 436.5h3M406 436.5h3M425 436.5h3M441 436.5h3M568 436.5h1M594 436.5h3M620 436.5h4M637 436.5h3M301 437.5h3M406 437.5h3M425 437.5h3M441 437.5h3M567 437.5h3M594 437.5h3M620 437.5h3M638 437.5h1M301 438.5h2M406 438.5h4M425 438.5h3M441 438.5h3M568 438.5h1M594 438.5h4M620 438.5h3M637 438.5h3M300 439.5h3M407 439.5h3M424 439.5h3M442 439.5h3M568 439.5h1M595 439.5h3M619 439.5h4M637 439.5h3M300 440.5h3M407 440.5h3M424 440.5h3M442 440.5h3M568 440.5h1M595 440.5h3M619 440.5h3M638 440.5h1M300 441.5h3M407 441.5h3M423 441.5h4M442 441.5h3M568 441.5h1M595 441.5h3M618 441.5h4M637 441.5h3M301 442.5h1M407 442.5h4M423 442.5h3M442 442.5h3M568 442.5h1M596 442.5h3M618 442.5h3M638 442.5h2M131 443.5h6M300 443.5h3M408 443.5h3M423 443.5h3M442 443.5h3M567 443.5h3M596 443.5h4M617 443.5h4M638 443.5h3M130 444.5h8M300 444.5h3M408 444.5h3M422 444.5h3M442 444.5h3M568 444.5h1M597 444.5h3M616 444.5h4M638 444.5h3M129 445.5h10M301 445.5h1M409 445.5h3M421 445.5h4M443 445.5h3M568 445.5h1M598 445.5h4M615 445.5h4M639 445.5h1M129 446.5h3M136 446.5h3M300 446.5h3M409 446.5h4M420 446.5h4M443 446.5h3M568 446.5h1M598 446.5h7M613 446.5h5M638 446.5h3M129 447.5h3M136 447.5h3M300 447.5h3M410 447.5h13M443 447.5h3M568 447.5h1M599 447.5h18M638 447.5h3M128 448.5h3M136 448.5h4M300 448.5h3M411 448.5h11M443 448.5h3M567 448.5h3M601 448.5h15M639 448.5h1M128 449.5h3M137 449.5h3M301 449.5h1M412 449.5h9M443 449.5h3M568 449.5h1M604 449.5h10M638 449.5h3M128 450.5h3M137 450.5h3M300 450.5h3M443 450.5h3M568 450.5h1M638 450.5h3M128 451.5h3M137 451.5h3M299 451.5h3M443 451.5h3M567 451.5h3M639 451.5h1M128 452.5h3M137 452.5h3M299 452.5h3M443 452.5h3M568 452.5h1M638 452.5h3M128 453.5h3M137 453.5h3M299 453.5h3M443 453.5h3M568 453.5h1M638 453.5h3M128 454.5h3M137 454.5h3M299 454.5h3M444 454.5h3M567 454.5h3M639 454.5h1M129 455.5h1M138 455.5h3M299 455.5h3M444 455.5h3M568 455.5h1M638 455.5h3M128 456.5h3M138 456.5h3M299 456.5h3M445 456.5h1M567 456.5h3M639 456.5h2M128 457.5h3M138 457.5h3M299 457.5h3M444 457.5h3M568 457.5h1M639 457.5h3M128 458.5h2M138 458.5h3M299 458.5h3M444 458.5h3M568 458.5h1M639 458.5h3M127 459.5h3M138 459.5h3M299 459.5h3M444 459.5h3M567 459.5h3M640 459.5h1M127 460.5h3M138 460.5h3M298 460.5h3M444 460.5h3M568 460.5h1M639 460.5h3M128 461.5h1M138 461.5h4M298 461.5h3M445 461.5h1M568 461.5h1M640 461.5h1M127 462.5h3M139 462.5h3M298 462.5h3M444 462.5h3M567 462.5h3M639 462.5h3M127 463.5h3M139 463.5h3M298 463.5h3M444 463.5h3M568 463.5h1M640 463.5h1M128 464.5h1M139 464.5h3M297 464.5h4M445 464.5h1M568 464.5h1M639 464.5h3M127 465.5h3M139 465.5h161M444 465.5h3M568 465.5h1M640 465.5h1M128 466.5h1M140 466.5h159M444 466.5h3M567 466.5h3M639 466.5h3M127 467.5h3M141 467.5h157M445 467.5h2M568 467.5h1M640 467.5h1M127 468.5h3M445 468.5h3M568 468.5h1M639 468.5h3M128 469.5h1M445 469.5h3M567 469.5h1M640 469.5h1M127 470.5h3M446 470.5h1M566 470.5h3M639 470.5h3M128 471.5h1M445 471.5h3M567 471.5h1M640 471.5h1M127 472.5h3M445 472.5h3M567 472.5h1M639 472.5h3M127 473.5h2M446 473.5h1M567 473.5h1M640 473.5h2M126 474.5h3M445 474.5h3M566 474.5h3M640 474.5h3M126 475.5h3M445 475.5h3M567 475.5h1M641 475.5h1M126 476.5h3M446 476.5h1M567 476.5h1M640 476.5h3M126 477.5h3M445 477.5h3M567 477.5h1M641 477.5h1M126 478.5h3M446 478.5h1M567 478.5h1M640 478.5h3M126 479.5h3M445 479.5h3M566 479.5h3M640 479.5h3M126 480.5h3M445 480.5h3M567 480.5h1M641 480.5h1M126 481.5h3M446 481.5h2M567 481.5h1M640 481.5h3M125 482.5h3M446 482.5h3M567 482.5h1M640 482.5h3M125 483.5h3M447 483.5h1M567 483.5h1M641 483.5h1M125 484.5h3M446 484.5h3M566 484.5h3M640 484.5h3M125 485.5h3M447 485.5h1M567 485.5h1M640 485.5h3M125 486.5h3M446 486.5h3M567 486.5h1M641 486.5h1M125 487.5h3M446 487.5h3M567 487.5h1M640 487.5h3M125 488.5h3M447 488.5h1M566 488.5h3M641 488.5h3M125 489.5h3M446 489.5h3M567 489.5h1M642 489.5h1M124 490.5h3M447 490.5h1M567 490.5h1M641 490.5h3M124 491.5h3M446 491.5h3M566 491.5h3M641 491.5h3M124 492.5h3M447 492.5h1M567 492.5h1M642 492.5h1M125 493.5h1M446 493.5h3M567 493.5h1M641 493.5h3M124 494.5h3M446 494.5h3M566 494.5h3M642 494.5h1M124 495.5h3M447 495.5h1M567 495.5h1M641 495.5h3M124 496.5h3M446 496.5h3M566 496.5h3M641 496.5h3M125 497.5h1M447 497.5h2M567 497.5h1M642 497.5h1M124 498.5h3M447 498.5h3M567 498.5h1M641 498.5h3M124 499.5h3M448 499.5h1M566 499.5h3M642 499.5h1M124 500.5h3M447 500.5h3M566 500.5h2M641 500.5h3M123 501.5h4M447 501.5h3M565 501.5h3M642 501.5h1M123 502.5h3M448 502.5h1M566 502.5h1M641 502.5h3M123 503.5h3M447 503.5h3M566 503.5h1M642 503.5h1M123 504.5h3M448 504.5h1M566 504.5h1M641 504.5h3M123 505.5h3M447 505.5h3M565 505.5h3M642 505.5h3M123 506.5h3M448 506.5h1M566 506.5h1M643 506.5h1M123 507.5h3M447 507.5h3M566 507.5h1M642 507.5h3M123 508.5h3M447 508.5h3M565 508.5h3M642 508.5h3M122 509.5h3M448 509.5h1M566 509.5h1M643 509.5h1M122 510.5h3M447 510.5h3M566 510.5h1M642 510.5h3M122 511.5h3M448 511.5h1M565 511.5h3M642 511.5h3M122 512.5h3M447 512.5h3M566 512.5h1M642 512.5h3M122 513.5h3M448 513.5h3M566 513.5h1M643 513.5h1M122 514.5h3M449 514.5h1M565 514.5h3M642 514.5h3M121 515.5h4M448 515.5h3M566 515.5h1M642 515.5h3M121 516.5h3M448 516.5h3M565 516.5h3M642 516.5h3M121 517.5h3M449 517.5h1M566 517.5h1M643 517.5h3M121 518.5h3M448 518.5h3M566 518.5h1M644 518.5h1M121 519.5h3M448 519.5h3M565 519.5h3M643 519.5h3M121 520.5h3M449 520.5h1M566 520.5h1M643 520.5h3M120 521.5h3M448 521.5h3M565 521.5h3M643 521.5h3M120 522.5h3M448 522.5h3M566 522.5h1M643 522.5h3M120 523.5h3M449 523.5h1M565 523.5h3M643 523.5h3M120 524.5h3M448 524.5h3M565 524.5h2M644 524.5h1M120 525.5h3M448 525.5h3M564 525.5h3M643 525.5h3M120 526.5h3M448 526.5h3M565 526.5h1M643 526.5h3M119 527.5h3M449 527.5h2M564 527.5h3M643 527.5h3M119 528.5h3M449 528.5h3M565 528.5h1M644 528.5h3M119 529.5h3M449 529.5h3M564 529.5h3M644 529.5h3M119 530.5h3M449 530.5h3M564 530.5h3M644 530.5h3M119 531.5h3M449 531.5h3M565 531.5h1M644 531.5h3M118 532.5h3M450 532.5h1M564 532.5h3M644 532.5h3M118 533.5h3M449 533.5h3M564 533.5h3M644 533.5h3M118 534.5h3M449 534.5h3M565 534.5h1M644 534.5h3M118 535.5h3M449 535.5h3M564 535.5h3M644 535.5h3M118 536.5h3M449 536.5h3M564 536.5h3M644 536.5h3M117 537.5h3M449 537.5h3M564 537.5h3M645 537.5h3M117 538.5h3M450 538.5h3M565 538.5h1M645 538.5h3M117 539.5h3M450 539.5h3M564 539.5h3M645 539.5h3M116 540.5h4M450 540.5h3M563 540.5h3M645 540.5h3M116 541.5h3M450 541.5h3M563 541.5h3M645 541.5h3M116 542.5h3M450 542.5h3M563 542.5h3M645 542.5h3M116 543.5h3M450 543.5h3M563 543.5h3M645 543.5h3M115 544.5h3M450 544.5h3M563 544.5h3M645 544.5h4M115 545.5h3M450 545.5h4M563 545.5h3M646 545.5h3M114 546.5h4M451 546.5h3M563 546.5h3M646 546.5h3M114 547.5h3M451 547.5h3M563 547.5h3M646 547.5h3M113 548.5h4M451 548.5h3M562 548.5h3M646 548.5h3M113 549.5h3M451 549.5h3M562 549.5h3M646 549.5h4M112 550.5h4M451 550.5h3M562 550.5h3M647 550.5h3M112 551.5h3M452 551.5h3M562 551.5h3M647 551.5h3M111 552.5h3M452 552.5h3M562 552.5h3M647 552.5h4M110 553.5h4M452 553.5h3M561 553.5h3M648 553.5h3M109 554.5h4M452 554.5h4M561 554.5h3M648 554.5h3M108 555.5h4M453 555.5h3M561 555.5h3M648 555.5h4M106 556.5h5M453 556.5h4M560 556.5h3M649 556.5h3M105 557.5h5M454 557.5h3M559 557.5h4M649 557.5h5M102 558.5h7M454 558.5h6M557 558.5h5M650 558.5h6M100 559.5h7M455 559.5h106M651 559.5h99M100 560.5h5M457 560.5h103M653 560.5h97" stroke="#f5484d" stroke-width="1" fill="none" shape-rendering="crispEdges"/>
<path d="M93 560.5H98M93 538.5H98M93 515.5H98M93 493.5H98M93 471.5H98M93 448.5H98M93 426.5H98M93 404.5H98M93 382.5H98M93 359.5H98M93 337.5H98M100.5 563V568M117.5 563V568M187.5 563V568M257.5 563V568M328.5 563V568M398.5 563V568M468.5 563V568M539.5 563V568M609.5 563V568M679.5 563V568M749.5 563V568" stroke="#000" stroke-width="1" fill="none" shape-rendering="crispEdges"/>
<text transform="translate(91.5,564.5) scale(0.925,1)" font-size="12.4" fill="#000" text-anchor="end" stroke="#000" stroke-width="0.22">0</text>
<text transform="translate(91.5,542.5) scale(0.925,1)" font-size="12.4" fill="#000" text-anchor="end" stroke="#000" stroke-width="0.22">5</text>
<text transform="translate(91.5,519.5) scale(0.925,1)" font-size="12.4" fill="#000" text-anchor="end" stroke="#000" stroke-width="0.22">10</text>
<text transform="translate(91.5,497.5) scale(0.925,1)" font-size="12.4" fill="#000" text-anchor="end" stroke="#000" stroke-width="0.22">15</text>
<text transform="translate(91.5,475.5) scale(0.925,1)" font-size="12.4" fill="#000" text-anchor="end" stroke="#000" stroke-width="0.22">20</text>
<text transform="translate(91.5,452.5) scale(0.925,1)" font-size="12.4" fill="#000" text-anchor="end" stroke="#000" stroke-width="0.22">25</text>
<text transform="translate(91.5,430.5) scale(0.925,1)" font-size="12.4" fill="#000" text-anchor="end" stroke="#000" stroke-width="0.22">30</text>
<text transform="translate(91.5,408.5) scale(0.925,1)" font-size="12.4" fill="#000" text-anchor="end" stroke="#000" stroke-width="0.22">35</text>
<text transform="translate(91.5,386.5) scale(0.925,1)" font-size="12.4" fill="#000" text-anchor="end" stroke="#000" stroke-width="0.22">40</text>
<text transform="translate(91.5,363.5) scale(0.925,1)" font-size="12.4" fill="#000" text-anchor="end" stroke="#000" stroke-width="0.22">45</text>
<text transform="translate(91.5,341.5) scale(0.925,1)" font-size="12.4" fill="#000" text-anchor="end" stroke="#000" stroke-width="0.22">50</text>
<text x="81.3" y="580" font-size="12.4" fill="#000" textLength="37.8" lengthAdjust="spacingAndGlyphs" stroke="#000" stroke-width="0.22">-1.2481</text>
<text transform="translate(187.5,580) scale(0.925,1)" font-size="12.4" fill="#000" text-anchor="middle" stroke="#000" stroke-width="0.22">-1</text>
<text transform="translate(257.5,580) scale(0.925,1)" font-size="12.4" fill="#000" text-anchor="middle" stroke="#000" stroke-width="0.22">-0.8</text>
<text transform="translate(328.5,580) scale(0.925,1)" font-size="12.4" fill="#000" text-anchor="middle" stroke="#000" stroke-width="0.22">-0.6</text>
<text transform="translate(398.5,580) scale(0.925,1)" font-size="12.4" fill="#000" text-anchor="middle" stroke="#000" stroke-width="0.22">-0.4</text>
<text transform="translate(468.5,580) scale(0.925,1)" font-size="12.4" fill="#000" text-anchor="middle" stroke="#000" stroke-width="0.22">-0.2</text>
<text transform="translate(539.5,580) scale(0.925,1)" font-size="12.4" fill="#000" text-anchor="middle" stroke="#000" stroke-width="0.22">0</text>
<text transform="translate(609.5,580) scale(0.925,1)" font-size="12.4" fill="#000" text-anchor="middle" stroke="#000" stroke-width="0.22">0.2</text>
<text transform="translate(679.5,580) scale(0.925,1)" font-size="12.4" fill="#000" text-anchor="middle" stroke="#000" stroke-width="0.22">0.4</text>
<text transform="translate(749.5,580) scale(0.925,1)" font-size="12.4" fill="#000" text-anchor="middle" stroke="#000" stroke-width="0.22">0.6</text>
<text x="374" y="597" font-size="12.4" fill="#000" textLength="94" lengthAdjust="spacingAndGlyphs" stroke="#000" stroke-width="0.22">Axial Position (m)</text>
<text transform="translate(71.3,503.5) rotate(-90)" font-size="12.4" textLength="111" lengthAdjust="spacingAndGlyphs" stroke="#000" stroke-width="0.22">On-Axis Potential (V)</text>
<text x="484" y="317" font-size="12.4" fill="#000" textLength="95" lengthAdjust="spacingAndGlyphs" stroke="#000" stroke-width="0.22">Magnetic Field (T)</text>
<text x="655" y="317" font-size="12.4" fill="#000" textLength="65.5" lengthAdjust="spacingAndGlyphs" stroke="#000" stroke-width="0.22">Potential (V)</text>
<rect x="590" y="305" width="28" height="17" fill="#808080"/><path d="M592 316 L600 307.5 L608 316 L612.5 318.5 L616 314" fill="none" stroke="#9ee06a" stroke-width="1" stroke-dasharray="2 2"/>
<rect x="731" y="305" width="28" height="17" fill="#000"/><path d="M733 319 L743.5 306.5 L754 319 L758 314.5" fill="none" stroke="#f03c3c" stroke-width="1"/>
<defs><linearGradient id="pb" x1="0" y1="0" x2="0" y2="1"><stop offset="0" stop-color="#d2d2d2"/><stop offset="1" stop-color="#b4b4b4"/></linearGradient><linearGradient id="pd" x1="0" y1="0" x2="0" y2="1"><stop offset="0" stop-color="#848484"/><stop offset="1" stop-color="#6c6c6c"/></linearGradient></defs><g shape-rendering="crispEdges">
<rect x="45" y="307" width="19" height="16" fill="url(#pb)"/><path d="M45.5 323V307.5H64" stroke="#e4e4e4" fill="none"/><path d="M45.5 322.5H63.5V308" stroke="#9a9a9a" fill="none"/>
<rect x="65" y="307" width="18" height="16" fill="url(#pd)"/><path d="M65.5 323V307.5H83" stroke="#5c5c5c" fill="none"/>
<rect x="87" y="307" width="19" height="16" fill="url(#pb)"/><path d="M87.5 323V307.5H106" stroke="#e4e4e4" fill="none"/><path d="M87.5 322.5H105.5V308" stroke="#9a9a9a" fill="none"/>
<rect x="48" y="310" width="2" height="2" fill="#3c783c"/><rect x="68" y="310" width="3" height="3" fill="#30e030"/><rect x="90" y="310" width="2" height="2" fill="#3c783c"/>
<path d="M48 315.5H61M54.5 309V322" stroke="#000" fill="none"/>
</g>
<circle cx="54.5" cy="315.5" r="1.3" fill="#c9c9c9" stroke="#000" stroke-width="0.8"/>
<path d="M73.5 316.5 L68.5 321.5" stroke="#000" stroke-width="2.2"/><path d="M73 317 L69 321" stroke="#bdbdbd" stroke-width="0.8"/>
<circle cx="76.5" cy="313.5" r="3.8" fill="#dcdcff" stroke="#000" stroke-width="1"/><path d="M74 313.5H79M76.5 311V316" stroke="#000" stroke-width="1"/>
<path d="M77 319.5H82L79.5 322Z" fill="#000"/>
<path d="M93.9 321.4 L90.5 316.2 L90.5 314.8 L92.2 314.5 L94.2 316.3 V311 Q94.9 309.5 95.9 311 V315.8 M95.9 311 V310 Q97 308.3 98.2 310 V315.5 M98.2 310.8 Q99.3 309.3 100.4 310.9 V315.8 M100.4 312.2 Q101.6 311.2 102.3 312.8 V317.4 Q102.2 319.6 100.3 321.4" fill="none" stroke="#000" stroke-width="0.8" stroke-linejoin="round" stroke-linecap="round"/>

</svg>
</body></html>
